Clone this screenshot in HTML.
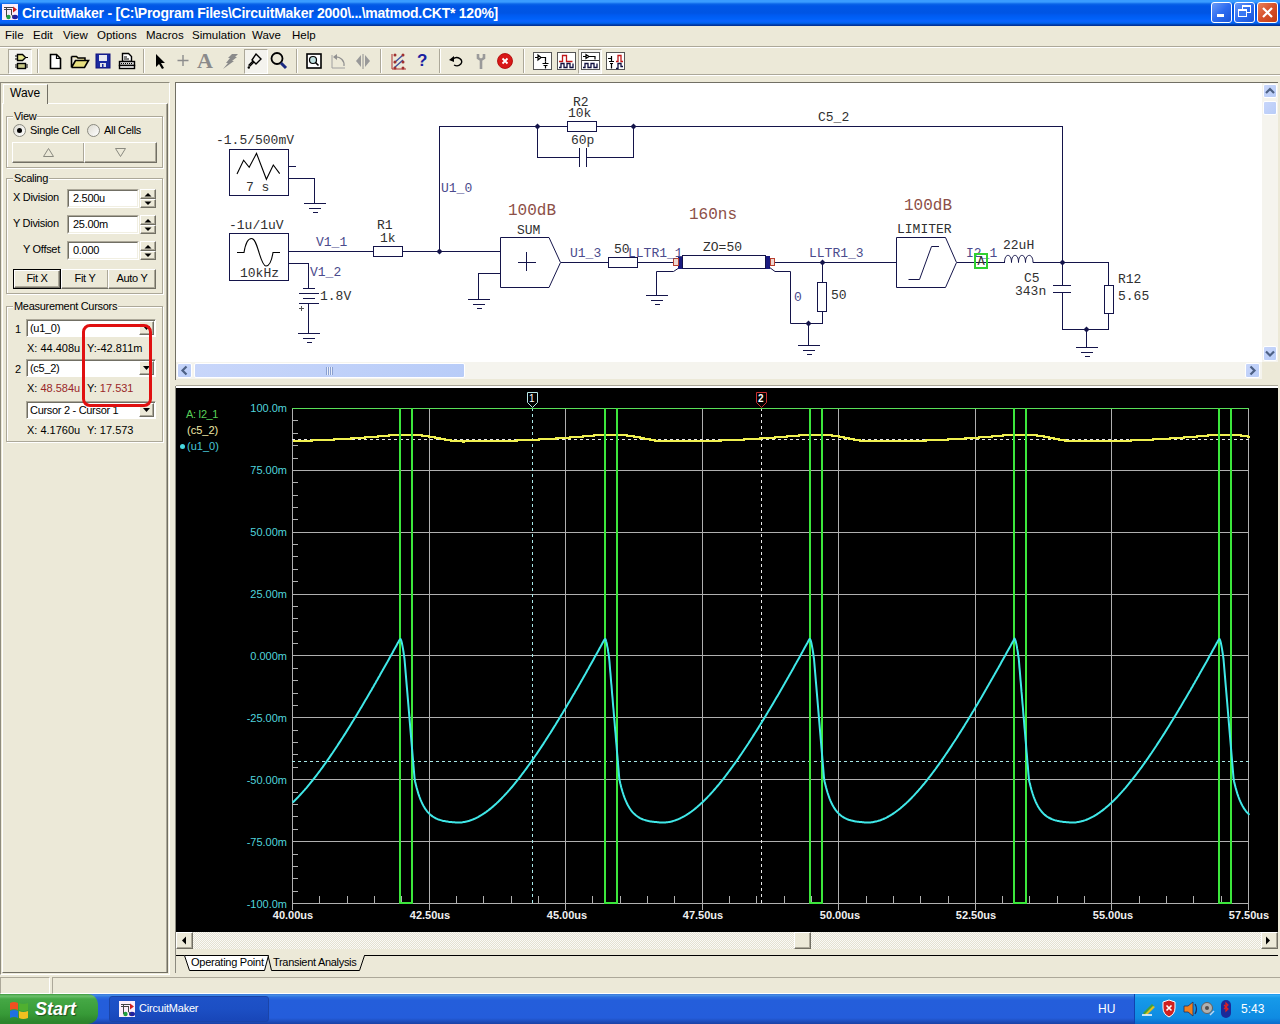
<!DOCTYPE html><html><head><meta charset="utf-8"><style>
*{margin:0;padding:0;box-sizing:border-box}
html,body{width:1280px;height:1024px;overflow:hidden;background:#ece9d8;font-family:"Liberation Sans",sans-serif;font-size:11px;color:#000;position:relative}
.a{position:absolute}
.t{position:absolute;white-space:nowrap;line-height:1}
.mono{font-family:"Liberation Mono",monospace}
</style></head><body>
<div class="a" style="left:0;top:0;width:1280px;height:26px;background:linear-gradient(#3a9cff 0px,#3a9cff 2px,#0a64e8 4px,#0056e6 6px,#0055e4 13px,#005af0 15px,#0062fa 19px,#0c62ff 21px,#0064ee 23px,#0052d4 24px,#003399 25px,#003399 26px)"></div><div class="a" style="left:0;top:26px;width:1280px;height:1px;background:#f4f4fc"></div>
<svg class="a" style="left:2px;top:4px" width="16" height="16"><rect x="0" y="0" width="16" height="16" fill="#fbeefa"/><path d="M2 3.5H11M2 5.5H9M4.5 3V13M9.5 5V11" stroke="#444" stroke-width="1" fill="none"/><path d="M11 2.5l4 3l-4 3z" fill="#d02020"/><ellipse cx="13" cy="13" rx="3" ry="2.2" fill="#2020a0"/><circle cx="6.5" cy="13" r="2.2" fill="#20a040"/><path d="M9.5 11L12 13" stroke="#444" stroke-width="1"/></svg>
<div class="t" style="left:22px;top:6px;font-size:14px;font-weight:bold;color:#fff;letter-spacing:-0.25px">CircuitMaker - [C:\Program Files\CircuitMaker 2000\...\matmod.CKT* 120%]</div>
<div class="a" style="left:1211px;top:2px;width:21px;height:21px;border:1px solid #fff;border-radius:3px;background:linear-gradient(135deg,#6b9bf7,#2d6cf0 50%,#1a55d8)"></div><div class="a" style="left:1217px;top:14px;width:7px;height:3px;background:#fff"></div><div class="a" style="left:1234px;top:2px;width:21px;height:21px;border:1px solid #fff;border-radius:3px;background:linear-gradient(135deg,#6b9bf7,#2d6cf0 50%,#1a55d8)"></div><div class="a" style="left:1242px;top:5px;width:9px;height:8px;border:1px solid #fff;border-top-width:2px"></div><div class="a" style="left:1238px;top:9px;width:9px;height:8px;border:1px solid #fff;border-top-width:2px;background:#3a78f2"></div><div class="a" style="left:1257px;top:2px;width:21px;height:21px;border:1px solid #fff;border-radius:3px;background:linear-gradient(135deg,#e9805a,#d6502a 50%,#c23d14)"></div><svg class="a" style="left:1257px;top:2px" width="21" height="21"><path d="M6 6L15 15M15 6L6 15" stroke="#fff" stroke-width="2.2"/></svg><div class="a" style="left:0;top:26px;width:1280px;height:20px;background:#ece9d8"></div><div class="t" style="left:5px;top:30px;font-size:11.5px">File</div><div class="t" style="left:33px;top:30px;font-size:11.5px">Edit</div><div class="t" style="left:63px;top:30px;font-size:11.5px">View</div><div class="t" style="left:97px;top:30px;font-size:11.5px">Options</div><div class="t" style="left:146px;top:30px;font-size:11.5px">Macros</div><div class="t" style="left:192px;top:30px;font-size:11.5px">Simulation</div><div class="t" style="left:252px;top:30px;font-size:11.5px">Wave</div><div class="t" style="left:292px;top:30px;font-size:11.5px">Help</div><div class="a" style="left:0;top:46px;width:1280px;height:1px;background:#aca899"></div><div class="a" style="left:0;top:47px;width:1280px;height:1px;background:#fff"></div><div class="a" style="left:0;top:74px;width:1280px;height:1px;background:#aca899"></div><div class="a" style="left:0;top:75px;width:1280px;height:1px;background:#fff"></div><div class="a" style="left:8px;top:49px;width:24px;height:25px;border-top:1px solid #aca899;border-left:1px solid #aca899;border-right:1px solid #fff;border-bottom:1px solid #fff;background:#f4f3ee"></div><svg class="a" style="left:8px;top:49px" width="24" height="25"><path d="M9.5 5.5h5l3 3l-3 3h-5z" fill="#e8e890" stroke="#000" stroke-width="1.4"/><path d="M7 7h2.5M7 10h2.5M17.5 8.5h2.5" stroke="#000" stroke-width="1.2"/><rect x="9.5" y="14.5" width="8" height="5" fill="#c8c888" stroke="#000" stroke-width="1.4"/><path d="M7 16h2.5M7 18h2.5M17.5 16h2.5M17.5 18h2.5" stroke="#000" stroke-width="1.2"/></svg><div class="a" style="left:37px;top:49px;width:1px;height:24px;background:#aca899"></div><div class="a" style="left:38px;top:49px;width:1px;height:24px;background:#fff"></div><svg class="a" style="left:46px;top:52px" width="20" height="18"><path d="M4.5 2.5h6l4 4v10h-10z" fill="#fff" stroke="#000" stroke-width="1.6"/><path d="M10.5 2.5v4h4" fill="none" stroke="#000" stroke-width="1.2"/></svg><svg class="a" style="left:69px;top:52px" width="22" height="18"><path d="M2.5 4.5h5l1.5 1.5h7v3" fill="#f0e890" stroke="#000" stroke-width="1.5"/><path d="M2.5 15.5v-11M2.5 15.5h13l4-7h-13l-4 7" fill="#e8e080" stroke="#000" stroke-width="1.6"/></svg><svg class="a" style="left:94px;top:52px" width="18" height="18"><rect x="2" y="2" width="14" height="14" fill="#1a2aa0" stroke="#10107a" stroke-width="1"/><rect x="5" y="3" width="8" height="6" fill="#e8e8f0"/><rect x="6" y="11" width="6" height="4" fill="#e0e0e8"/><rect x="8" y="12" width="1.5" height="3" fill="#1a2aa0"/></svg><svg class="a" style="left:117px;top:51px" width="20" height="20"><path d="M5.5 2.5h6l3 3v5h-9z" fill="#fff" stroke="#000" stroke-width="1.4"/><path d="M7 6h3M7 8h5" stroke="#000" stroke-width="1"/><rect x="2.5" y="10.5" width="15" height="4" fill="#e0e0e0" stroke="#000" stroke-width="1.4"/><path d="M4 12.5h12" stroke="#000" stroke-width="1" stroke-dasharray="1 1"/><rect x="2.5" y="14.5" width="15" height="3" fill="#fff" stroke="#000" stroke-width="1.4"/></svg><div class="a" style="left:143px;top:49px;width:1px;height:24px;background:#aca899"></div><div class="a" style="left:144px;top:49px;width:1px;height:24px;background:#fff"></div><svg class="a" style="left:150px;top:50px" width="20" height="22"><path d="M6 4v13l3-3l3 5l2-1l-3-5h4z" fill="#000"/></svg><svg class="a" style="left:174px;top:50px" width="18" height="22"><path d="M9 5v11M3.5 10.5h11" stroke="#8c8c8c" stroke-width="1.4"/></svg><div class="t" style="left:197px;top:50px;font-family:'Liberation Serif',serif;font-size:22px;font-weight:bold;color:#8a8a8a">A</div><svg class="a" style="left:217px;top:50px" width="22" height="22"><path d="M15 4h6l-3 3h2l-5 4h2l-11 8l5-6h-2l4-5h-2z" fill="#8a8a8a"/></svg><div class="a" style="left:244px;top:49px;width:24px;height:25px;border-top:1px solid #aca899;border-left:1px solid #aca899;border-right:1px solid #fff;border-bottom:1px solid #fff;background:#f4f3ee"></div><svg class="a" style="left:244px;top:49px" width="24" height="25"><path d="M12 5l5 5l-5 5l-4-4z" fill="none" stroke="#000" stroke-width="1.4"/><path d="M9 12l-4.5 4.5M10 13l-4.5 4.5" stroke="#000" stroke-width="1.2"/><circle cx="4.8" cy="18.5" r="1.2" fill="#000"/></svg><svg class="a" style="left:268px;top:50px" width="22" height="22"><circle cx="9" cy="8.5" r="5.5" fill="none" stroke="#000" stroke-width="1.8"/><path d="M13 13l5 5" stroke="#1a2a80" stroke-width="3"/></svg><div class="a" style="left:296px;top:49px;width:1px;height:24px;background:#aca899"></div><div class="a" style="left:297px;top:49px;width:1px;height:24px;background:#fff"></div><svg class="a" style="left:305px;top:52px" width="18" height="18"><rect x="2" y="2" width="14" height="14" fill="#fff" stroke="#000" stroke-width="1.6"/><circle cx="8" cy="8" r="3.5" fill="#bfe0e0" stroke="#000" stroke-width="1.2"/><path d="M10.5 10.5l3 3" stroke="#000" stroke-width="1.6"/></svg><svg class="a" style="left:329px;top:52px" width="20" height="18"><path d="M3 3v13h13" fill="none" stroke="#a0a0a0" stroke-width="1"/><path d="M6 5a8 8 0 0 1 9 9" fill="none" stroke="#909090" stroke-width="1.2"/><path d="M4 5l4-3v6z" fill="#909090"/></svg><svg class="a" style="left:353px;top:51px" width="20" height="20"><path d="M8 4l-5 6l5 6z" fill="#999"/><path d="M12 4l5 6l-5 6z" fill="#999"/><path d="M10 3v15" stroke="#909090" stroke-width="1"/></svg><div class="a" style="left:380px;top:49px;width:1px;height:24px;background:#aca899"></div><div class="a" style="left:381px;top:49px;width:1px;height:24px;background:#fff"></div><svg class="a" style="left:389px;top:51px" width="20" height="20"><path d="M3 3v15h14" fill="none" stroke="#b03030" stroke-width="1"/><path d="M5 12l9-8M5 17l9-8" stroke="#4050a0" stroke-width="1.4"/><circle cx="6" cy="4" r="1.5" fill="#a03030"/><circle cx="14" cy="4" r="1.5" fill="#a03030"/><circle cx="6" cy="11" r="1.5" fill="#a03030"/><circle cx="14" cy="11" r="1.5" fill="#a03030"/><circle cx="6" cy="17" r="1.5" fill="#a03030"/><circle cx="14" cy="17" r="1.5" fill="#a03030"/></svg><div class="t" style="left:417px;top:52px;font-size:17px;font-weight:bold;color:#1a20a0">?</div><div class="a" style="left:439px;top:49px;width:1px;height:24px;background:#aca899"></div><div class="a" style="left:440px;top:49px;width:1px;height:24px;background:#fff"></div><svg class="a" style="left:447px;top:51px" width="20" height="20"><path d="M6 8a5 4 0 1 1 1 6" fill="none" stroke="#000" stroke-width="1.4"/><path d="M2 9l5-4v6z" fill="#000"/></svg><svg class="a" style="left:472px;top:51px" width="18" height="20"><path d="M6 3v4l3 2l3-2v-4M9 9v9" fill="none" stroke="#9a9a9a" stroke-width="2.6"/></svg><svg class="a" style="left:495px;top:51px" width="20" height="20"><circle cx="10" cy="10" r="7.5" fill="#d81818" stroke="#a00" stroke-width="0.8"/><path d="M7.5 7.5l5 5M12.5 7.5l-5 5" stroke="#fff" stroke-width="1.8"/></svg><div class="a" style="left:523px;top:49px;width:1px;height:24px;background:#aca899"></div><div class="a" style="left:524px;top:49px;width:1px;height:24px;background:#fff"></div><svg class="a" style="left:532px;top:51px" width="21" height="20"><rect x="1.5" y="1.5" width="18" height="17" fill="#fff" stroke="#555" stroke-width="1"/><path d="M3 6.5h3M6 4v5l3-2.5zM9 6.5h4.5v4M10.5 12.5h6M11.5 14.5h4M13.5 14.5v3" fill="none" stroke="#000" stroke-width="1.2"/><path d="M13.5 10.5v2" stroke="#000" stroke-width="1.2"/></svg><svg class="a" style="left:556px;top:51px" width="21" height="20"><rect x="1.5" y="1.5" width="18" height="17" fill="#fff" stroke="#555" stroke-width="1"/><path d="M3 10.5h3.5v-6h4v6h6" fill="none" stroke="#c01818" stroke-width="1.3"/><path d="M3 16.5h2v-4h3v4h3v-4h3v4h3v-4" fill="none" stroke="#101040" stroke-width="1.3"/></svg><div class="a" style="left:578px;top:49px;width:24px;height:25px;border-top:1px solid #aca899;border-left:1px solid #aca899;border-right:1px solid #fff;border-bottom:1px solid #fff;background:#f4f3ee"></div><svg class="a" style="left:580px;top:51px" width="21" height="20"><rect x="1.5" y="1.5" width="18" height="17" fill="#fff" stroke="#555" stroke-width="1"/><path d="M3 5.5h3M6 3.5v4l3-2zM9 5.5h6v3" fill="none" stroke="#000" stroke-width="1.2"/><path d="M2 9.5h17" stroke="#333" stroke-width="1"/><path d="M3 16.5h2v-4h3v4h3v-4h3v4h3v-4" fill="none" stroke="#101040" stroke-width="1.3"/></svg><svg class="a" style="left:605px;top:51px" width="21" height="20"><rect x="1.5" y="1.5" width="18" height="17" fill="#fff" stroke="#555" stroke-width="1"/><path d="M3 7.5h3.5M6.5 5v5M4 10.5h5M5 12.5h3M6.5 12.5v5" fill="none" stroke="#000" stroke-width="1.2"/><path d="M11 10.5h2v-6h3v6h2" fill="none" stroke="#c01818" stroke-width="1.3"/><path d="M11 17.5h2v-5h3v3h2" fill="none" stroke="#101040" stroke-width="1.3"/></svg><div class="a" style="left:0;top:76px;width:176px;height:901px;background:#ece9d8"></div><div class="a" style="left:0;top:82px;width:170px;height:893px;border-top:1px solid #8e8b7c;border-left:1px solid #8e8b7c;border-right:1px solid #fff;border-bottom:1px solid #fff"></div><div class="a" style="left:2px;top:103px;width:166px;height:870px;border-left:1px solid #fff;border-top:1px solid #fff;border-right:1px solid #716f64;border-bottom:1px solid #716f64;background:#ece9d8"></div><div class="a" style="left:166px;top:104px;width:1px;height:868px;background:#aca899"></div><div class="a" style="left:3px;top:84px;width:45px;height:20px;border-left:1px solid #fff;border-top:1px solid #fff;border-right:1px solid #716f64;background:#ece9d8"></div><div class="t" style="left:10px;top:87px;font-size:12px">Wave</div><div class="a" style="left:6px;top:116px;width:157px;height:52px;border:1px solid #aca899;box-shadow:inset 1px 1px 0 #fff,1px 1px 0 #fff"></div><div class="t" style="left:13px;top:111px;padding:0 1px;background:#ece9d8;font-size:11px;letter-spacing:-0.3px">View</div><div class="a" style="left:13px;top:124px;width:13px;height:13px;border-radius:50%;border:1px solid #8a8a80;background:linear-gradient(135deg,#dcdad0,#fff)"></div><div class="a" style="left:17px;top:128px;width:5px;height:5px;border-radius:50%;background:#000"></div><div class="t" style="left:30px;top:125px;font-size:11px;letter-spacing:-0.3px">Single Cell</div><div class="a" style="left:87px;top:124px;width:13px;height:13px;border-radius:50%;border:1px solid #8a8a80;background:linear-gradient(135deg,#dcdad0,#fff)"></div><div class="t" style="left:104px;top:125px;font-size:11px;letter-spacing:-0.3px">All Cells</div><div class="a" style="left:12px;top:142px;width:73px;height:21px;border-left:1px solid #fff;border-top:1px solid #fff;border-right:1px solid #716f64;border-bottom:1px solid #716f64;background:#ece9d8"></div><div class="a" style="left:83px;top:143px;width:1px;height:19px;background:#aca899"></div><div class="a" style="left:13px;top:161px;width:71px;height:1px;background:#aca899"></div><div class="a" style="left:84px;top:142px;width:73px;height:21px;border-left:1px solid #fff;border-top:1px solid #fff;border-right:1px solid #716f64;border-bottom:1px solid #716f64;background:#ece9d8"></div><div class="a" style="left:155px;top:143px;width:1px;height:19px;background:#aca899"></div><div class="a" style="left:85px;top:161px;width:71px;height:1px;background:#aca899"></div><svg class="a" style="left:12px;top:142px" width="145" height="21"><path d="M36.5 6.5l5 8h-10z" fill="none" stroke="#8a8a80" stroke-width="1"/><path d="M103.5 6.5h10l-5 8z" fill="none" stroke="#8a8a80" stroke-width="1"/></svg><div class="a" style="left:6px;top:178px;width:157px;height:116px;border:1px solid #aca899;box-shadow:inset 1px 1px 0 #fff,1px 1px 0 #fff"></div><div class="t" style="left:13px;top:173px;padding:0 1px;background:#ece9d8;font-size:11px;letter-spacing:-0.3px">Scaling</div><div class="t" style="left:13px;top:192px;font-size:11px;letter-spacing:-0.3px">X Division</div><div class="a" style="left:67px;top:189px;width:72px;height:19px;border-left:1px solid #aca899;border-top:1px solid #aca899;border-right:1px solid #fff;border-bottom:1px solid #fff;background:#fff"></div><div class="a" style="left:68px;top:190px;width:70px;height:17px;border-left:1px solid #716f64;border-top:1px solid #716f64;border-right:1px solid #f1efe2;border-bottom:1px solid #f1efe2"></div><div class="t" style="left:73px;top:193px;font-size:11px;letter-spacing:-0.3px">2.500u</div><div class="a" style="left:140px;top:189px;width:16px;height:10px;border-left:1px solid #fff;border-top:1px solid #fff;border-right:1px solid #716f64;border-bottom:1px solid #716f64;background:#ece9d8"></div><div class="a" style="left:154px;top:190px;width:1px;height:8px;background:#aca899"></div><div class="a" style="left:141px;top:197px;width:14px;height:1px;background:#aca899"></div><div class="a" style="left:140px;top:199px;width:16px;height:9px;border-left:1px solid #fff;border-top:1px solid #fff;border-right:1px solid #716f64;border-bottom:1px solid #716f64;background:#ece9d8"></div><div class="a" style="left:154px;top:200px;width:1px;height:7px;background:#aca899"></div><div class="a" style="left:141px;top:206px;width:14px;height:1px;background:#aca899"></div><svg class="a" style="left:140px;top:189px" width="16" height="19"><path d="M4.5 7.5h7l-3.5-3.5z" fill="#000"/><path d="M4.5 12.5h7l-3.5 3.5z" fill="#000"/></svg><div class="t" style="left:13px;top:218px;font-size:11px;letter-spacing:-0.3px">Y Division</div><div class="a" style="left:67px;top:215px;width:72px;height:19px;border-left:1px solid #aca899;border-top:1px solid #aca899;border-right:1px solid #fff;border-bottom:1px solid #fff;background:#fff"></div><div class="a" style="left:68px;top:216px;width:70px;height:17px;border-left:1px solid #716f64;border-top:1px solid #716f64;border-right:1px solid #f1efe2;border-bottom:1px solid #f1efe2"></div><div class="t" style="left:73px;top:219px;font-size:11px;letter-spacing:-0.3px">25.00m</div><div class="a" style="left:140px;top:215px;width:16px;height:10px;border-left:1px solid #fff;border-top:1px solid #fff;border-right:1px solid #716f64;border-bottom:1px solid #716f64;background:#ece9d8"></div><div class="a" style="left:154px;top:216px;width:1px;height:8px;background:#aca899"></div><div class="a" style="left:141px;top:223px;width:14px;height:1px;background:#aca899"></div><div class="a" style="left:140px;top:225px;width:16px;height:9px;border-left:1px solid #fff;border-top:1px solid #fff;border-right:1px solid #716f64;border-bottom:1px solid #716f64;background:#ece9d8"></div><div class="a" style="left:154px;top:226px;width:1px;height:7px;background:#aca899"></div><div class="a" style="left:141px;top:232px;width:14px;height:1px;background:#aca899"></div><svg class="a" style="left:140px;top:215px" width="16" height="19"><path d="M4.5 7.5h7l-3.5-3.5z" fill="#000"/><path d="M4.5 12.5h7l-3.5 3.5z" fill="#000"/></svg><div class="t" style="left:23px;top:244px;font-size:11px;letter-spacing:-0.3px">Y Offset</div><div class="a" style="left:67px;top:241px;width:72px;height:19px;border-left:1px solid #aca899;border-top:1px solid #aca899;border-right:1px solid #fff;border-bottom:1px solid #fff;background:#fff"></div><div class="a" style="left:68px;top:242px;width:70px;height:17px;border-left:1px solid #716f64;border-top:1px solid #716f64;border-right:1px solid #f1efe2;border-bottom:1px solid #f1efe2"></div><div class="t" style="left:73px;top:245px;font-size:11px;letter-spacing:-0.3px">0.000</div><div class="a" style="left:140px;top:241px;width:16px;height:10px;border-left:1px solid #fff;border-top:1px solid #fff;border-right:1px solid #716f64;border-bottom:1px solid #716f64;background:#ece9d8"></div><div class="a" style="left:154px;top:242px;width:1px;height:8px;background:#aca899"></div><div class="a" style="left:141px;top:249px;width:14px;height:1px;background:#aca899"></div><div class="a" style="left:140px;top:251px;width:16px;height:9px;border-left:1px solid #fff;border-top:1px solid #fff;border-right:1px solid #716f64;border-bottom:1px solid #716f64;background:#ece9d8"></div><div class="a" style="left:154px;top:252px;width:1px;height:7px;background:#aca899"></div><div class="a" style="left:141px;top:258px;width:14px;height:1px;background:#aca899"></div><svg class="a" style="left:140px;top:241px" width="16" height="19"><path d="M4.5 7.5h7l-3.5-3.5z" fill="#000"/><path d="M4.5 12.5h7l-3.5 3.5z" fill="#000"/></svg><div class="a" style="left:13px;top:269px;width:48px;height:20px;border:1px solid #000"></div><div class="a" style="left:14px;top:270px;width:46px;height:18px;border-left:1px solid #fff;border-top:1px solid #fff;border-right:1px solid #716f64;border-bottom:1px solid #716f64;background:#ece9d8"></div><div class="a" style="left:58px;top:271px;width:1px;height:16px;background:#aca899"></div><div class="a" style="left:15px;top:286px;width:44px;height:1px;background:#aca899"></div><div class="t" style="left:14px;top:273px;width:46px;text-align:center;font-size:11px;letter-spacing:-0.3px">Fit X</div><div class="a" style="left:61px;top:269px;width:48px;height:20px;border-left:1px solid #fff;border-top:1px solid #fff;border-right:1px solid #716f64;border-bottom:1px solid #716f64;background:#ece9d8"></div><div class="a" style="left:107px;top:270px;width:1px;height:18px;background:#aca899"></div><div class="a" style="left:62px;top:287px;width:46px;height:1px;background:#aca899"></div><div class="t" style="left:61px;top:273px;width:48px;text-align:center;font-size:11px;letter-spacing:-0.3px">Fit Y</div><div class="a" style="left:108px;top:269px;width:48px;height:20px;border-left:1px solid #fff;border-top:1px solid #fff;border-right:1px solid #716f64;border-bottom:1px solid #716f64;background:#ece9d8"></div><div class="a" style="left:154px;top:270px;width:1px;height:18px;background:#aca899"></div><div class="a" style="left:109px;top:287px;width:46px;height:1px;background:#aca899"></div><div class="t" style="left:108px;top:273px;width:48px;text-align:center;font-size:11px;letter-spacing:-0.3px">Auto Y</div><div class="a" style="left:6px;top:306px;width:157px;height:136px;border:1px solid #aca899;box-shadow:inset 1px 1px 0 #fff,1px 1px 0 #fff"></div><div class="t" style="left:13px;top:301px;padding:0 1px;background:#ece9d8;font-size:11px;letter-spacing:-0.3px">Measurement Cursors</div><div class="t" style="left:15px;top:324px;font-size:11px;letter-spacing:-0.3px">1</div><div class="a" style="left:26px;top:319px;width:130px;height:18px;border-left:1px solid #aca899;border-top:1px solid #aca899;border-right:1px solid #fff;border-bottom:1px solid #fff;background:#fff"></div><div class="a" style="left:27px;top:320px;width:128px;height:16px;border-left:1px solid #716f64;border-top:1px solid #716f64"></div><div class="t" style="left:30px;top:323px;font-size:11px;letter-spacing:-0.3px">(u1_0)</div><div class="a" style="left:139px;top:321px;width:15px;height:14px;border-left:1px solid #fff;border-top:1px solid #fff;border-right:1px solid #716f64;border-bottom:1px solid #716f64;background:#ece9d8"></div><div class="a" style="left:152px;top:322px;width:1px;height:12px;background:#aca899"></div><div class="a" style="left:140px;top:333px;width:13px;height:1px;background:#aca899"></div><svg class="a" style="left:139px;top:321px" width="15" height="14"><path d="M4 5h7l-3.5 4z" fill="#000"/></svg><div class="t" style="left:27px;top:343px;font-size:11px;letter-spacing:0px">X: 44.408u</div><div class="t" style="left:87px;top:343px;font-size:11px;letter-spacing:0px">Y:-42.811m</div><div class="t" style="left:15px;top:364px;font-size:11px;letter-spacing:-0.3px">2</div><div class="a" style="left:26px;top:359px;width:130px;height:18px;border-left:1px solid #aca899;border-top:1px solid #aca899;border-right:1px solid #fff;border-bottom:1px solid #fff;background:#fff"></div><div class="a" style="left:27px;top:360px;width:128px;height:16px;border-left:1px solid #716f64;border-top:1px solid #716f64"></div><div class="t" style="left:30px;top:363px;font-size:11px;letter-spacing:-0.3px">(c5_2)</div><div class="a" style="left:139px;top:361px;width:15px;height:14px;border-left:1px solid #fff;border-top:1px solid #fff;border-right:1px solid #716f64;border-bottom:1px solid #716f64;background:#ece9d8"></div><div class="a" style="left:152px;top:362px;width:1px;height:12px;background:#aca899"></div><div class="a" style="left:140px;top:373px;width:13px;height:1px;background:#aca899"></div><svg class="a" style="left:139px;top:361px" width="15" height="14"><path d="M4 5h7l-3.5 4z" fill="#000"/></svg><div class="t" style="left:27px;top:383px;font-size:11px;letter-spacing:0px">X: <span style="color:#9a2828">48.584u</span></div><div class="t" style="left:87px;top:383px;font-size:11px;letter-spacing:0px">Y: <span style="color:#9a2828">17.531</span></div><div class="a" style="left:26px;top:401px;width:130px;height:18px;border-left:1px solid #aca899;border-top:1px solid #aca899;border-right:1px solid #fff;border-bottom:1px solid #fff;background:#fff"></div><div class="a" style="left:27px;top:402px;width:128px;height:16px;border-left:1px solid #716f64;border-top:1px solid #716f64"></div><div class="t" style="left:30px;top:405px;font-size:11px;letter-spacing:-0.3px">Cursor 2 - Cursor 1</div><div class="a" style="left:139px;top:403px;width:15px;height:14px;border-left:1px solid #fff;border-top:1px solid #fff;border-right:1px solid #716f64;border-bottom:1px solid #716f64;background:#ece9d8"></div><div class="a" style="left:152px;top:404px;width:1px;height:12px;background:#aca899"></div><div class="a" style="left:140px;top:415px;width:13px;height:1px;background:#aca899"></div><svg class="a" style="left:139px;top:403px" width="15" height="14"><path d="M4 5h7l-3.5 4z" fill="#000"/></svg><div class="t" style="left:27px;top:425px;font-size:11px;letter-spacing:0px">X: 4.1760u</div><div class="t" style="left:87px;top:425px;font-size:11px;letter-spacing:0px">Y: 17.573</div><div class="a" style="left:82px;top:324px;width:70px;height:83px;border:3px solid #e01010;border-radius:8px"></div><div class="a" style="left:175px;top:82px;width:1103px;height:1px;background:#716f64"></div><div class="a" style="left:175px;top:82px;width:1px;height:298px;background:#716f64"></div><div class="a" style="left:176px;top:83px;width:1086px;height:279px;background:#fff"></div><svg class="a" style="left:176px;top:83px" width="1086" height="279" shape-rendering="crispEdges"><g transform="translate(-176,-83)" fill="none" stroke="#14144a" stroke-width="1"><rect x="229.5" y="149.5" width="59" height="46" fill="#fff"/><path d="M237 174L243.6 160.2L249.2 167.3L256.5 153.4L266.4 179.3L273.3 165L279.7 173.6" stroke="#000" shape-rendering="auto" stroke-width="1.1"/><path d="M288.5 166.5 L296 166.5"/><path d="M288.5 178.5 L314.5 178.5 L314.5 203.5"/><path d="M303.5 203.5 L325.5 203.5"/><path d="M308.5 208.5 L320.5 208.5"/><path d="M312.5 212.5 L317.5 212.5"/><rect x="229.5" y="233.5" width="59" height="47" fill="#fff"/><path d="M237 252.5H244C246 240 249 238.5 251.5 238.5C255 238.5 257 246 259 252.5C261 259 263 266 266 266C269 266 271.5 262 273 252.5H280" stroke="#000" shape-rendering="auto" stroke-width="1.1"/><path d="M288.5 251.5 L373.5 251.5"/><path d="M288.5 263.5 L308.5 263.5 L308.5 288.5"/><path d="M303 288.5 L315 288.5"/><path d="M299 293.5 L319 293.5"/><path d="M303 298.5 L315 298.5"/><path d="M299 303.5 L319 303.5"/><path d="M308.5 303.5 L308.5 333.5"/><path d="M297.5 333.5 L319.5 333.5"/><path d="M302.5 338.5 L314.5 338.5"/><path d="M306.5 342.5 L311.5 342.5"/><path d="M299 308H304M301.5 305.5V310.5" stroke="#555"/><rect x="373.5" y="246.5" width="29" height="10" fill="#fff"/><path d="M402.5 251.5 L500.5 251.5"/><path d="M439.5 248.5l3 3l-3 3l-3-3z" fill="#14144a" stroke="none" shape-rendering="auto"/><path d="M439.5 251.5 L439.5 126.5 L1062.5 126.5 L1062.5 329.5 L1108.5 329.5"/><rect x="567.5" y="121.5" width="29" height="10" fill="#fff"/><path d="M537.5 123.5l3 3l-3 3l-3-3z" fill="#14144a" stroke="none" shape-rendering="auto"/><path d="M633.5 123.5l3 3l-3 3l-3-3z" fill="#14144a" stroke="none" shape-rendering="auto"/><path d="M537.5 126.5 L537.5 157.5 L579.5 157.5"/><path d="M586.5 157.5 L633.5 157.5 L633.5 126.5"/><path d="M579.5 148 L579.5 167"/><path d="M586.5 148 L586.5 167"/><path d="M500.5 237.5H549L560.5 262.5L549 287.5H500.5Z" fill="#fff" shape-rendering="auto"/><path d="M517.5 262.5 L535.5 262.5"/><path d="M526.5 252 L526.5 271"/><path d="M500.5 273.5 L478.5 273.5 L478.5 299.5"/><path d="M467.5 299.5 L489.5 299.5"/><path d="M472.5 304.5 L484.5 304.5"/><path d="M476.5 308.5 L481.5 308.5"/><path d="M560.5 262.5 L608.5 262.5"/><rect x="608.5" y="257.5" width="29" height="10" fill="#fff"/><path d="M637.5 262.5 L673.5 262.5"/><rect x="682.5" y="255.5" width="83" height="13" fill="#fff" stroke="#14144a"/><rect x="678" y="255.5" width="4" height="13" fill="#1a1a80" stroke="none"/><rect x="766" y="255.5" width="4" height="13" fill="#1a1a80" stroke="none"/><rect x="673.5" y="258.5" width="4.5" height="6.5" fill="#f0d8d0" stroke="#b84030"/><rect x="770" y="258.5" width="4.5" height="6.5" fill="#f0d8d0" stroke="#b84030"/><path d="M678 268.5L673.5 271.5H656.5V295.5" shape-rendering="auto"/><path d="M645.5 295.5 L667.5 295.5"/><path d="M650.5 300.5 L662.5 300.5"/><path d="M654.5 304.5 L659.5 304.5"/><path d="M769 267L775 271.5H790.5V323.5H822.5" shape-rendering="auto"/><path d="M774.5 262.5 L896.5 262.5"/><path d="M822.5 259.5l3 3l-3 3l-3-3z" fill="#14144a" stroke="none" shape-rendering="auto"/><path d="M822.5 262.5 L822.5 282.5"/><rect x="817.5" y="282.5" width="9" height="29" fill="#fff"/><path d="M822.5 311.5 L822.5 323.5"/><path d="M808.5 320.5l3 3l-3 3l-3-3z" fill="#14144a" stroke="none" shape-rendering="auto"/><path d="M808.5 323.5 L808.5 345.5"/><path d="M797.5 345.5 L819.5 345.5"/><path d="M802.5 350.5 L814.5 350.5"/><path d="M806.5 354.5 L811.5 354.5"/><path d="M896.5 237.5H945.5L956.5 262.5L945.5 287.5H896.5Z" fill="#fff" shape-rendering="auto"/><path d="M908.5 279.5H919.5L931.5 246.5H939" shape-rendering="auto"/><path d="M956.5 262.5 L1004.5 262.5"/><path d="M1004.5 262.5C1004.5 253 1011.5 253 1011.5 262.5C1011.5 253 1018.5 253 1018.5 262.5C1018.5 253 1025.5 253 1025.5 262.5C1025.5 253 1033 253 1033 262.5" shape-rendering="auto"/><path d="M1033 262.5 L1108.5 262.5 L1108.5 285.5"/><path d="M1062.5 259.5l3 3l-3 3l-3-3z" fill="#14144a" stroke="none" shape-rendering="auto"/><rect x="1053" y="286" width="19" height="6" fill="#fff" stroke="none"/><path d="M1053 285.5 L1071 285.5"/><path d="M1053 292.5 L1071 292.5"/><rect x="1104.5" y="285.5" width="9" height="28" fill="#fff"/><path d="M1108.5 313.5 L1108.5 329.5"/><path d="M1086.5 326.5l3 3l-3 3l-3-3z" fill="#14144a" stroke="none" shape-rendering="auto"/><path d="M1086.5 329.5 L1086.5 347.5"/><path d="M1075.5 347.5 L1097.5 347.5"/><path d="M1080.5 352.5 L1092.5 352.5"/><path d="M1084.5 356.5 L1089.5 356.5"/></g><text x="40" y="61" fill="#303030" font-family="Liberation Mono" font-size="13" stroke="none">-1.5/500mV</text><text x="70" y="108" fill="#303030" font-family="Liberation Mono" font-size="13" stroke="none">7 s</text><text x="53" y="145.5" fill="#303030" font-family="Liberation Mono" font-size="13" stroke="none">-1u/1uV</text><text x="64" y="194" fill="#303030" font-family="Liberation Mono" font-size="13" stroke="none">10kHz</text><text x="140" y="162.5" fill="#4a4a8c" font-family="Liberation Mono" font-size="13" stroke="none">V1_1</text><text x="134" y="193" fill="#4a4a8c" font-family="Liberation Mono" font-size="13" stroke="none">V1_2</text><text x="144" y="216.5" fill="#303030" font-family="Liberation Mono" font-size="13" stroke="none">1.8V</text><text x="201" y="146" fill="#303030" font-family="Liberation Mono" font-size="13" stroke="none">R1</text><text x="204" y="158.5" fill="#303030" font-family="Liberation Mono" font-size="13" stroke="none">1k</text><text x="265" y="109" fill="#4a4a8c" font-family="Liberation Mono" font-size="13" stroke="none">U1_0</text><text x="397" y="22.5" fill="#303030" font-family="Liberation Mono" font-size="13" stroke="none">R2</text><text x="392" y="34" fill="#303030" font-family="Liberation Mono" font-size="13" stroke="none">10k</text><text x="395" y="61" fill="#303030" font-family="Liberation Mono" font-size="13" stroke="none">60p</text><text x="642" y="38" fill="#303030" font-family="Liberation Mono" font-size="13" stroke="none">C5_2</text><text x="332" y="132" fill="#8c5048" font-family="Liberation Mono" font-size="16" stroke="none">100dB</text><text x="341" y="150.5" fill="#303030" font-family="Liberation Mono" font-size="13" stroke="none">SUM</text><text x="394" y="174" fill="#4a4a8c" font-family="Liberation Mono" font-size="13" stroke="none">U1_3</text><text x="438" y="170" fill="#303030" font-family="Liberation Mono" font-size="13" stroke="none">50</text><text x="452" y="174" fill="#4a4a8c" font-family="Liberation Mono" font-size="13" stroke="none">LLTR1_1</text><text x="513" y="136" fill="#8c5048" font-family="Liberation Mono" font-size="16" stroke="none">160ns</text><text x="527" y="168" fill="#303030" font-family="Liberation Mono" font-size="13" stroke="none">ZO=50</text><text x="633" y="174" fill="#4a4a8c" font-family="Liberation Mono" font-size="13" stroke="none">LLTR1_3</text><text x="618" y="218" fill="#4a4a8c" font-family="Liberation Mono" font-size="13" stroke="none">0</text><text x="655" y="216" fill="#303030" font-family="Liberation Mono" font-size="13" stroke="none">50</text><text x="728" y="127" fill="#8c5048" font-family="Liberation Mono" font-size="16" stroke="none">100dB</text><text x="721" y="150" fill="#303030" font-family="Liberation Mono" font-size="13" stroke="none">LIMITER</text><text x="790" y="174" fill="#4a4a8c" font-family="Liberation Mono" font-size="13" stroke="none">I2_1</text><text x="827" y="166" fill="#303030" font-family="Liberation Mono" font-size="13" stroke="none">22uH</text><text x="848" y="199" fill="#303030" font-family="Liberation Mono" font-size="13" stroke="none">C5</text><text x="839" y="212" fill="#303030" font-family="Liberation Mono" font-size="13" stroke="none">343n</text><text x="942" y="200" fill="#303030" font-family="Liberation Mono" font-size="13" stroke="none">R12</text><text x="942" y="217" fill="#303030" font-family="Liberation Mono" font-size="13" stroke="none">5.65</text><rect x="799" y="170.5" width="12" height="14" fill="none" stroke="#30d030" stroke-width="2"/><text x="801.5" y="182" fill="#303030" font-family="Liberation Mono" font-size="12" stroke="none">A</text></svg><div class="a" style="left:1262px;top:83px;width:16px;height:279px;background:#f5f4ee"></div><div class="a" style="left:1263px;top:84px;width:14px;height:14px;border:1px solid #fff;border-radius:2px;background:linear-gradient(135deg,#c8d6fa,#b8ccf8)"></div><svg class="a" style="left:0;top:0" width="1280" height="400"><path d="M1266 93L1270 89L1274 93" fill="none" stroke="#4d6185" stroke-width="2.2"/></svg><div class="a" style="left:1263px;top:101px;width:14px;height:14px;border:1px solid #fff;border-radius:2px;background:linear-gradient(135deg,#c8d6fa,#b8ccf8)"></div><div class="a" style="left:1263px;top:346px;width:14px;height:15px;border:1px solid #fff;border-radius:2px;background:linear-gradient(135deg,#c8d6fa,#b8ccf8)"></div><svg class="a" style="left:0;top:0" width="1280" height="400"><path d="M1266 351.5L1270 355.5L1274 351.5" fill="none" stroke="#4d6185" stroke-width="2.2"/></svg><div class="a" style="left:176px;top:362px;width:1102px;height:17px;background:#f5f4ee"></div><div class="a" style="left:177px;top:363px;width:15px;height:15px;border:1px solid #fff;border-radius:2px;background:linear-gradient(135deg,#c8d6fa,#b8ccf8)"></div><svg class="a" style="left:0;top:0" width="1280" height="400"><path d="M186.5 366.5L182.5 370.5L186.5 374.5" fill="none" stroke="#4d6185" stroke-width="2.2"/></svg><div class="a" style="left:194px;top:363px;width:271px;height:15px;border:1px solid #fff;border-radius:2px;background:linear-gradient(135deg,#c8d6fa,#b8ccf8)"></div><div class="a" style="left:326px;top:367px;width:7px;height:8px;background:repeating-linear-gradient(90deg,#8aa0d0 0 1px,#e8eefc 1px 2px)"></div><div class="a" style="left:1245px;top:363px;width:15px;height:15px;border:1px solid #fff;border-radius:2px;background:linear-gradient(135deg,#c8d6fa,#b8ccf8)"></div><svg class="a" style="left:0;top:0" width="1280" height="400"><path d="M1250.5 366.5L1254.5 370.5L1250.5 374.5" fill="none" stroke="#4d6185" stroke-width="2.2"/></svg><div class="a" style="left:1262px;top:362px;width:16px;height:17px;background:#ece9d8"></div><div class="a" style="left:176px;top:385px;width:1102px;height:1px;background:#aca899"></div><div class="a" style="left:176px;top:386px;width:1102px;height:2px;background:#fff"></div><div class="a" style="left:176px;top:388px;width:1102px;height:544px;background:#000"></div><svg class="a" style="left:176px;top:388px" width="1102" height="544"><g transform="translate(-176,-388)"><path d="M429.5 408.5V903.5 M565.5 408.5V903.5 M702.5 408.5V903.5 M838.5 408.5V903.5 M975.5 408.5V903.5 M1111.5 408.5V903.5 M1248.5 408.5V903.5 M292.5 470.5H1248.5 M292.5 532.5H1248.5 M292.5 594.5H1248.5 M292.5 655.5H1248.5 M292.5 717.5H1248.5 M292.5 779.5H1248.5 M292.5 841.5H1248.5" stroke="#b0b0b0" stroke-width="1" shape-rendering="crispEdges"/><path d="M292.5 408V910M292 903.5H1249M1248.5 903V910" stroke="#b0b0b0" stroke-width="1" shape-rendering="crispEdges"/><path d="M292 420.5H298 M292 433.5H298 M292 445.5H298 M292 458.5H298 M292 482.5H298 M292 495.5H298 M292 507.5H298 M292 519.5H298 M292 544.5H298 M292 556.5H298 M292 569.5H298 M292 581.5H298 M292 606.5H298 M292 618.5H298 M292 631.5H298 M292 643.5H298 M292 668.5H298 M292 680.5H298 M292 693.5H298 M292 705.5H298 M292 730.5H298 M292 742.5H298 M292 754.5H298 M292 767.5H298 M292 792.5H298 M292 804.5H298 M292 816.5H298 M292 829.5H298 M292 854.5H298 M292 866.5H298 M292 878.5H298 M292 891.5H298 M319.5 903V896 M347.5 903V896 M374.5 903V896 M401.5 903V896 M456.5 903V896 M483.5 903V896 M511.5 903V896 M538.5 903V896 M592.5 903V896 M620.5 903V896 M647.5 903V896 M674.5 903V896 M729.5 903V896 M756.5 903V896 M784.5 903V896 M811.5 903V896 M866.5 903V896 M893.5 903V896 M920.5 903V896 M948.5 903V896 M1002.5 903V896 M1029.5 903V896 M1057.5 903V896 M1084.5 903V896 M1139.5 903V896 M1166.5 903V896 M1193.5 903V896 M1221.5 903V896 M429.5 903V910 M565.5 903V910 M702.5 903V910 M838.5 903V910 M975.5 903V910 M1111.5 903V910" stroke="#b0b0b0" stroke-width="1" shape-rendering="crispEdges"/><path d="M532.5 408V903" stroke="#a8e8e8" stroke-width="1" stroke-dasharray="3 3" shape-rendering="crispEdges"/><path d="M761.5 408V903" stroke="#e8e8e8" stroke-width="1" stroke-dasharray="3 3" shape-rendering="crispEdges"/><path d="M292 761.5H1249" stroke="#a8e8e8" stroke-width="1" stroke-dasharray="3 3" shape-rendering="crispEdges"/><path d="M292 439.5H1249" stroke="#e8e8e8" stroke-width="1" stroke-dasharray="3 3" shape-rendering="crispEdges"/><path d="M292.5,441.0 L293.5,441.0 L294.5,441.0 L295.5,441.0 L296.5,441.0 L297.5,441.0 L298.5,441.0 L299.5,441.0 L300.5,441.0 L301.5,441.0 L302.5,441.0 L303.5,441.0 L304.5,441.0 L305.5,441.0 L306.5,441.0 L307.5,441.0 L308.5,441.0 L309.5,441.0 L310.5,441.0 L311.5,441.0 L311.5,440.0 L312.5,440.0 L313.5,440.0 L314.5,440.0 L315.5,440.0 L316.5,440.0 L317.5,440.0 L318.5,440.0 L319.5,440.0 L320.5,440.0 L321.5,440.0 L322.5,440.0 L323.5,440.0 L324.5,440.0 L325.5,440.0 L326.5,440.0 L327.5,440.0 L328.5,440.0 L329.5,440.0 L330.5,440.0 L331.5,440.0 L332.5,440.0 L333.5,440.0 L333.5,439.0 L334.5,439.0 L335.5,439.0 L336.5,439.0 L337.5,439.0 L338.5,439.0 L339.5,439.0 L340.5,439.0 L341.5,439.0 L342.5,439.0 L343.5,439.0 L344.5,439.0 L345.5,439.0 L346.5,439.0 L347.5,439.0 L348.5,439.0 L349.5,439.0 L350.5,439.0 L350.5,438.0 L351.5,438.0 L352.5,438.0 L353.5,438.0 L354.5,438.0 L355.5,438.0 L356.5,438.0 L357.5,438.0 L358.5,438.0 L359.5,438.0 L360.5,438.0 L361.5,438.0 L362.5,438.0 L363.5,438.0 L364.5,438.0 L364.5,437.0 L365.5,437.0 L366.5,437.0 L367.5,437.0 L368.5,437.0 L369.5,437.0 L370.5,437.0 L371.5,437.0 L372.5,437.0 L373.5,437.0 L374.5,437.0 L375.5,437.0 L376.5,437.0 L377.5,437.0 L377.5,436.0 L378.5,436.0 L379.5,436.0 L380.5,436.0 L381.5,436.0 L382.5,436.0 L383.5,436.0 L384.5,436.0 L385.5,436.0 L386.5,436.0 L387.5,436.0 L388.5,436.0 L388.5,435.0 L389.5,435.0 L390.5,435.0 L391.5,435.0 L392.5,435.0 L393.5,435.0 L394.5,435.0 L395.5,435.0 L396.5,435.0 L397.5,435.0 L398.5,435.0 L399.5,435.0 L400.5,435.0 L401.5,435.0 L402.5,435.0 L403.5,435.0 L404.5,435.0 L405.5,435.0 L406.5,435.0 L407.5,435.0 L408.5,435.0 L409.5,435.0 L410.5,435.0 L411.5,435.0 L412.5,435.0 L413.5,435.0 L414.5,435.0 L415.5,435.0 L416.5,435.0 L417.5,435.0 L418.5,435.0 L419.5,435.0 L420.5,435.0 L421.5,435.0 L421.5,436.0 L422.5,436.0 L423.5,436.0 L424.5,436.0 L425.5,436.0 L426.5,436.0 L427.5,436.0 L428.5,436.0 L428.5,437.0 L429.5,437.0 L430.5,437.0 L431.5,437.0 L432.5,437.0 L433.5,437.0 L434.5,437.0 L434.5,438.0 L435.5,438.0 L436.5,438.0 L437.5,438.0 L438.5,438.0 L439.5,438.0 L439.5,439.0 L440.5,439.0 L441.5,439.0 L442.5,439.0 L443.5,439.0 L444.5,439.0 L444.5,440.0 L445.5,440.0 L446.5,440.0 L447.5,440.0 L448.5,440.0 L449.5,440.0 L450.5,440.0 L450.5,441.0 L451.5,441.0 L452.5,441.0 L453.5,441.0 L454.5,441.0 L455.5,441.0 L456.5,441.0 L457.5,441.0 L458.5,441.0 L459.5,441.0 L460.5,441.0 L461.5,441.0 L462.5,441.0 L462.5,442.0 L463.5,442.0 L463.5,441.0 L464.5,441.0 L465.5,441.0 L466.5,441.0 L467.5,441.0 L468.5,441.0 L469.5,441.0 L470.5,441.0 L471.5,441.0 L472.5,441.0 L473.5,441.0 L474.5,441.0 L475.5,441.0 L476.5,441.0 L477.5,441.0 L478.5,441.0 L479.5,441.0 L480.5,441.0 L481.5,441.0 L482.5,441.0 L483.5,441.0 L484.5,441.0 L485.5,441.0 L486.5,441.0 L487.5,441.0 L488.5,441.0 L489.5,441.0 L490.5,441.0 L491.5,441.0 L492.5,441.0 L493.5,441.0 L494.5,441.0 L495.5,441.0 L496.5,441.0 L497.5,441.0 L498.5,441.0 L499.5,441.0 L500.5,441.0 L501.5,441.0 L502.5,441.0 L503.5,441.0 L504.5,441.0 L505.5,441.0 L506.5,441.0 L507.5,441.0 L508.5,441.0 L509.5,441.0 L510.5,441.0 L511.5,441.0 L512.5,441.0 L513.5,441.0 L514.5,441.0 L515.5,441.0 L516.5,441.0 L516.5,440.0 L517.5,440.0 L518.5,440.0 L519.5,440.0 L520.5,440.0 L521.5,440.0 L522.5,440.0 L523.5,440.0 L524.5,440.0 L525.5,440.0 L526.5,440.0 L527.5,440.0 L528.5,440.0 L529.5,440.0 L530.5,440.0 L531.5,440.0 L532.5,440.0 L533.5,440.0 L534.5,440.0 L535.5,440.0 L536.5,440.0 L537.5,440.0 L538.5,440.0 L538.5,439.0 L539.5,439.0 L540.5,439.0 L541.5,439.0 L542.5,439.0 L543.5,439.0 L544.5,439.0 L545.5,439.0 L546.5,439.0 L547.5,439.0 L548.5,439.0 L549.5,439.0 L550.5,439.0 L551.5,439.0 L552.5,439.0 L553.5,439.0 L554.5,439.0 L555.5,439.0 L555.5,438.0 L556.5,438.0 L557.5,438.0 L558.5,438.0 L559.5,438.0 L560.5,438.0 L561.5,438.0 L562.5,438.0 L563.5,438.0 L564.5,438.0 L565.5,438.0 L566.5,438.0 L567.5,438.0 L568.5,438.0 L569.5,438.0 L569.5,437.0 L570.5,437.0 L571.5,437.0 L572.5,437.0 L573.5,437.0 L574.5,437.0 L575.5,437.0 L576.5,437.0 L577.5,437.0 L578.5,437.0 L579.5,437.0 L580.5,437.0 L581.5,437.0 L582.5,437.0 L582.5,436.0 L583.5,436.0 L584.5,436.0 L585.5,436.0 L586.5,436.0 L587.5,436.0 L588.5,436.0 L589.5,436.0 L590.5,436.0 L591.5,436.0 L592.5,436.0 L593.5,436.0 L593.5,435.0 L594.5,435.0 L595.5,435.0 L596.5,435.0 L597.5,435.0 L598.5,435.0 L599.5,435.0 L600.5,435.0 L601.5,435.0 L602.5,435.0 L603.5,435.0 L604.5,435.0 L605.5,435.0 L606.5,435.0 L607.5,435.0 L608.5,435.0 L609.5,435.0 L610.5,435.0 L611.5,435.0 L612.5,435.0 L613.5,435.0 L614.5,435.0 L615.5,435.0 L616.5,435.0 L617.5,435.0 L618.5,435.0 L619.5,435.0 L620.5,435.0 L621.5,435.0 L622.5,435.0 L623.5,435.0 L624.5,435.0 L625.5,435.0 L626.5,435.0 L626.5,436.0 L627.5,436.0 L628.5,436.0 L629.5,436.0 L630.5,436.0 L631.5,436.0 L632.5,436.0 L633.5,436.0 L633.5,437.0 L634.5,437.0 L635.5,437.0 L636.5,437.0 L637.5,437.0 L638.5,437.0 L639.5,437.0 L639.5,438.0 L640.5,438.0 L641.5,438.0 L642.5,438.0 L643.5,438.0 L643.5,439.0 L644.5,439.0 L645.5,439.0 L646.5,439.0 L647.5,439.0 L648.5,439.0 L649.5,439.0 L649.5,440.0 L650.5,440.0 L651.5,440.0 L652.5,440.0 L653.5,440.0 L654.5,440.0 L654.5,441.0 L655.5,441.0 L656.5,441.0 L657.5,441.0 L658.5,441.0 L659.5,441.0 L660.5,441.0 L661.5,441.0 L662.5,441.0 L663.5,441.0 L664.5,441.0 L665.5,441.0 L666.5,441.0 L667.5,441.0 L668.5,441.0 L669.5,441.0 L670.5,441.0 L671.5,441.0 L672.5,441.0 L673.5,441.0 L674.5,441.0 L675.5,441.0 L676.5,441.0 L677.5,441.0 L678.5,441.0 L679.5,441.0 L680.5,441.0 L681.5,441.0 L682.5,441.0 L683.5,441.0 L684.5,441.0 L685.5,441.0 L686.5,441.0 L687.5,441.0 L688.5,441.0 L689.5,441.0 L690.5,441.0 L691.5,441.0 L692.5,441.0 L693.5,441.0 L694.5,441.0 L695.5,441.0 L696.5,441.0 L697.5,441.0 L698.5,441.0 L699.5,441.0 L700.5,441.0 L701.5,441.0 L702.5,441.0 L703.5,441.0 L704.5,441.0 L705.5,441.0 L706.5,441.0 L707.5,441.0 L708.5,441.0 L709.5,441.0 L710.5,441.0 L711.5,441.0 L712.5,441.0 L713.5,441.0 L714.5,441.0 L715.5,441.0 L716.5,441.0 L717.5,441.0 L718.5,441.0 L719.5,441.0 L720.5,441.0 L720.5,440.0 L721.5,440.0 L722.5,440.0 L723.5,440.0 L724.5,440.0 L725.5,440.0 L726.5,440.0 L727.5,440.0 L728.5,440.0 L729.5,440.0 L730.5,440.0 L731.5,440.0 L732.5,440.0 L733.5,440.0 L734.5,440.0 L735.5,440.0 L736.5,440.0 L737.5,440.0 L738.5,440.0 L739.5,440.0 L740.5,440.0 L741.5,440.0 L742.5,440.0 L743.5,440.0 L743.5,439.0 L744.5,439.0 L745.5,439.0 L746.5,439.0 L747.5,439.0 L748.5,439.0 L749.5,439.0 L750.5,439.0 L751.5,439.0 L752.5,439.0 L753.5,439.0 L754.5,439.0 L755.5,439.0 L756.5,439.0 L757.5,439.0 L758.5,439.0 L759.5,439.0 L759.5,438.0 L760.5,438.0 L761.5,438.0 L762.5,438.0 L763.5,438.0 L764.5,438.0 L765.5,438.0 L766.5,438.0 L767.5,438.0 L768.5,438.0 L769.5,438.0 L770.5,438.0 L771.5,438.0 L772.5,438.0 L773.5,438.0 L774.5,438.0 L774.5,437.0 L775.5,437.0 L776.5,437.0 L777.5,437.0 L778.5,437.0 L779.5,437.0 L780.5,437.0 L781.5,437.0 L782.5,437.0 L783.5,437.0 L784.5,437.0 L785.5,437.0 L786.5,437.0 L786.5,436.0 L787.5,436.0 L788.5,436.0 L789.5,436.0 L790.5,436.0 L791.5,436.0 L792.5,436.0 L793.5,436.0 L794.5,436.0 L795.5,436.0 L796.5,436.0 L797.5,436.0 L798.5,436.0 L798.5,435.0 L799.5,435.0 L800.5,435.0 L801.5,435.0 L802.5,435.0 L803.5,435.0 L804.5,435.0 L805.5,435.0 L806.5,435.0 L807.5,435.0 L808.5,435.0 L809.5,435.0 L810.5,435.0 L811.5,435.0 L812.5,435.0 L813.5,435.0 L814.5,435.0 L815.5,435.0 L816.5,435.0 L817.5,435.0 L818.5,435.0 L819.5,435.0 L820.5,435.0 L821.5,435.0 L822.5,435.0 L823.5,435.0 L824.5,435.0 L825.5,435.0 L826.5,435.0 L827.5,435.0 L828.5,435.0 L829.5,435.0 L830.5,435.0 L831.5,435.0 L831.5,436.0 L832.5,436.0 L833.5,436.0 L834.5,436.0 L835.5,436.0 L836.5,436.0 L837.5,436.0 L838.5,436.0 L838.5,437.0 L839.5,437.0 L840.5,437.0 L841.5,437.0 L842.5,437.0 L843.5,437.0 L843.5,438.0 L844.5,438.0 L845.5,438.0 L846.5,438.0 L847.5,438.0 L848.5,438.0 L848.5,439.0 L849.5,439.0 L850.5,439.0 L851.5,439.0 L852.5,439.0 L853.5,439.0 L853.5,440.0 L854.5,440.0 L855.5,440.0 L856.5,440.0 L857.5,440.0 L858.5,440.0 L859.5,440.0 L859.5,441.0 L860.5,441.0 L861.5,441.0 L862.5,441.0 L863.5,441.0 L864.5,441.0 L865.5,441.0 L866.5,441.0 L867.5,441.0 L868.5,441.0 L869.5,441.0 L870.5,441.0 L871.5,441.0 L872.5,441.0 L873.5,441.0 L874.5,441.0 L875.5,441.0 L876.5,441.0 L877.5,441.0 L878.5,441.0 L879.5,441.0 L880.5,441.0 L881.5,441.0 L882.5,441.0 L883.5,441.0 L884.5,441.0 L885.5,441.0 L886.5,441.0 L887.5,441.0 L888.5,441.0 L889.5,441.0 L890.5,441.0 L891.5,441.0 L892.5,441.0 L893.5,441.0 L894.5,441.0 L895.5,441.0 L896.5,441.0 L897.5,441.0 L898.5,441.0 L899.5,441.0 L900.5,441.0 L901.5,441.0 L902.5,441.0 L903.5,441.0 L904.5,441.0 L905.5,441.0 L906.5,441.0 L907.5,441.0 L908.5,441.0 L909.5,441.0 L910.5,441.0 L911.5,441.0 L912.5,441.0 L913.5,441.0 L914.5,441.0 L915.5,441.0 L916.5,441.0 L917.5,441.0 L918.5,441.0 L919.5,441.0 L920.5,441.0 L921.5,441.0 L922.5,441.0 L923.5,441.0 L924.5,441.0 L925.5,441.0 L925.5,440.0 L926.5,440.0 L927.5,440.0 L928.5,440.0 L929.5,440.0 L930.5,440.0 L931.5,440.0 L932.5,440.0 L933.5,440.0 L934.5,440.0 L935.5,440.0 L936.5,440.0 L937.5,440.0 L938.5,440.0 L939.5,440.0 L940.5,440.0 L941.5,440.0 L942.5,440.0 L943.5,440.0 L944.5,440.0 L945.5,440.0 L946.5,440.0 L947.5,440.0 L947.5,439.0 L948.5,439.0 L949.5,439.0 L950.5,439.0 L951.5,439.0 L952.5,439.0 L953.5,439.0 L954.5,439.0 L955.5,439.0 L956.5,439.0 L957.5,439.0 L958.5,439.0 L959.5,439.0 L960.5,439.0 L961.5,439.0 L962.5,439.0 L963.5,439.0 L964.5,439.0 L964.5,438.0 L965.5,438.0 L966.5,438.0 L967.5,438.0 L968.5,438.0 L969.5,438.0 L970.5,438.0 L971.5,438.0 L972.5,438.0 L973.5,438.0 L974.5,438.0 L975.5,438.0 L976.5,438.0 L977.5,438.0 L978.5,438.0 L978.5,437.0 L979.5,437.0 L980.5,437.0 L981.5,437.0 L982.5,437.0 L983.5,437.0 L984.5,437.0 L985.5,437.0 L986.5,437.0 L987.5,437.0 L988.5,437.0 L989.5,437.0 L990.5,437.0 L991.5,437.0 L991.5,436.0 L992.5,436.0 L993.5,436.0 L994.5,436.0 L995.5,436.0 L996.5,436.0 L997.5,436.0 L998.5,436.0 L999.5,436.0 L1000.5,436.0 L1001.5,436.0 L1002.5,436.0 L1002.5,435.0 L1003.5,435.0 L1004.5,435.0 L1005.5,435.0 L1006.5,435.0 L1007.5,435.0 L1008.5,435.0 L1009.5,435.0 L1010.5,435.0 L1011.5,435.0 L1012.5,435.0 L1013.5,435.0 L1014.5,435.0 L1015.5,435.0 L1016.5,435.0 L1017.5,435.0 L1018.5,435.0 L1019.5,435.0 L1020.5,435.0 L1021.5,435.0 L1022.5,435.0 L1023.5,435.0 L1024.5,435.0 L1025.5,435.0 L1026.5,435.0 L1027.5,435.0 L1028.5,435.0 L1029.5,435.0 L1030.5,435.0 L1031.5,435.0 L1032.5,435.0 L1033.5,435.0 L1034.5,435.0 L1035.5,435.0 L1036.5,435.0 L1036.5,436.0 L1037.5,436.0 L1038.5,436.0 L1039.5,436.0 L1040.5,436.0 L1041.5,436.0 L1042.5,436.0 L1043.5,436.0 L1043.5,437.0 L1044.5,437.0 L1045.5,437.0 L1046.5,437.0 L1047.5,437.0 L1048.5,437.0 L1048.5,438.0 L1049.5,438.0 L1050.5,438.0 L1051.5,438.0 L1052.5,438.0 L1053.5,438.0 L1053.5,439.0 L1054.5,439.0 L1055.5,439.0 L1056.5,439.0 L1057.5,439.0 L1058.5,439.0 L1058.5,440.0 L1059.5,440.0 L1060.5,440.0 L1061.5,440.0 L1062.5,440.0 L1063.5,440.0 L1064.5,440.0 L1064.5,441.0 L1065.5,441.0 L1066.5,441.0 L1067.5,441.0 L1068.5,441.0 L1069.5,441.0 L1070.5,441.0 L1071.5,441.0 L1072.5,441.0 L1073.5,441.0 L1074.5,441.0 L1075.5,441.0 L1076.5,441.0 L1077.5,441.0 L1078.5,441.0 L1079.5,441.0 L1080.5,441.0 L1081.5,441.0 L1082.5,441.0 L1083.5,441.0 L1084.5,441.0 L1085.5,441.0 L1086.5,441.0 L1087.5,441.0 L1088.5,441.0 L1089.5,441.0 L1090.5,441.0 L1091.5,441.0 L1092.5,441.0 L1093.5,441.0 L1094.5,441.0 L1095.5,441.0 L1096.5,441.0 L1097.5,441.0 L1098.5,441.0 L1099.5,441.0 L1100.5,441.0 L1101.5,441.0 L1102.5,441.0 L1103.5,441.0 L1104.5,441.0 L1105.5,441.0 L1106.5,441.0 L1107.5,441.0 L1108.5,441.0 L1109.5,441.0 L1110.5,441.0 L1111.5,441.0 L1112.5,441.0 L1113.5,441.0 L1114.5,441.0 L1115.5,441.0 L1116.5,441.0 L1117.5,441.0 L1118.5,441.0 L1119.5,441.0 L1120.5,441.0 L1121.5,441.0 L1122.5,441.0 L1123.5,441.0 L1124.5,441.0 L1125.5,441.0 L1126.5,441.0 L1127.5,441.0 L1128.5,441.0 L1129.5,441.0 L1130.5,441.0 L1130.5,440.0 L1131.5,440.0 L1132.5,440.0 L1133.5,440.0 L1134.5,440.0 L1135.5,440.0 L1136.5,440.0 L1137.5,440.0 L1138.5,440.0 L1139.5,440.0 L1140.5,440.0 L1141.5,440.0 L1142.5,440.0 L1143.5,440.0 L1144.5,440.0 L1145.5,440.0 L1146.5,440.0 L1147.5,440.0 L1148.5,440.0 L1149.5,440.0 L1150.5,440.0 L1151.5,440.0 L1152.5,440.0 L1152.5,439.0 L1153.5,439.0 L1154.5,439.0 L1155.5,439.0 L1156.5,439.0 L1157.5,439.0 L1158.5,439.0 L1159.5,439.0 L1160.5,439.0 L1161.5,439.0 L1162.5,439.0 L1163.5,439.0 L1164.5,439.0 L1165.5,439.0 L1166.5,439.0 L1167.5,439.0 L1168.5,439.0 L1169.5,439.0 L1169.5,438.0 L1170.5,438.0 L1171.5,438.0 L1172.5,438.0 L1173.5,438.0 L1174.5,438.0 L1175.5,438.0 L1176.5,438.0 L1177.5,438.0 L1178.5,438.0 L1179.5,438.0 L1180.5,438.0 L1181.5,438.0 L1182.5,438.0 L1183.5,438.0 L1183.5,437.0 L1184.5,437.0 L1185.5,437.0 L1186.5,437.0 L1187.5,437.0 L1188.5,437.0 L1189.5,437.0 L1190.5,437.0 L1191.5,437.0 L1192.5,437.0 L1193.5,437.0 L1194.5,437.0 L1195.5,437.0 L1196.5,437.0 L1196.5,436.0 L1197.5,436.0 L1198.5,436.0 L1199.5,436.0 L1200.5,436.0 L1201.5,436.0 L1202.5,436.0 L1203.5,436.0 L1204.5,436.0 L1205.5,436.0 L1206.5,436.0 L1207.5,436.0 L1207.5,435.0 L1208.5,435.0 L1209.5,435.0 L1210.5,435.0 L1211.5,435.0 L1212.5,435.0 L1213.5,435.0 L1214.5,435.0 L1215.5,435.0 L1216.5,435.0 L1217.5,435.0 L1218.5,435.0 L1219.5,435.0 L1220.5,435.0 L1221.5,435.0 L1222.5,435.0 L1223.5,435.0 L1224.5,435.0 L1225.5,435.0 L1226.5,435.0 L1227.5,435.0 L1228.5,435.0 L1229.5,435.0 L1230.5,435.0 L1231.5,435.0 L1232.5,435.0 L1233.5,435.0 L1234.5,435.0 L1235.5,435.0 L1236.5,435.0 L1237.5,435.0 L1238.5,435.0 L1239.5,435.0 L1240.5,435.0 L1240.5,436.0 L1241.5,436.0 L1242.5,436.0 L1243.5,436.0 L1244.5,436.0 L1245.5,436.0 L1246.5,436.0 L1247.5,436.0 L1247.5,437.0 L1248.5,437.0 L1249.5,437.0" fill="none" stroke="#f0f050" stroke-width="2" shape-rendering="crispEdges"/><path d="M292 408.5H1249" fill="none" stroke="#58e058" stroke-width="1" shape-rendering="crispEdges"/><path d=" M400.0 408V903H412.0V408 M604.8 408V903H616.8V408 M809.5 408V903H821.5V408 M1014.2 408V903H1026.2V408 M1219.0 408V903H1231.0V408" fill="none" stroke="#3ce63c" stroke-width="2" shape-rendering="crispEdges"/><path d="M292.5,802.6 L293.5,801.7 L294.5,800.7 L295.5,799.7 L296.5,798.7 L297.5,797.7 L298.5,796.7 L299.5,795.6 L300.5,794.5 L301.5,793.4 L302.5,792.3 L303.5,791.2 L304.5,790.1 L305.5,788.9 L306.5,787.8 L307.5,786.6 L308.5,785.4 L309.5,784.2 L310.5,782.9 L311.5,781.7 L312.5,780.5 L313.5,779.2 L314.5,777.9 L315.5,776.6 L316.5,775.3 L317.5,774.0 L318.5,772.7 L319.5,771.3 L320.5,770.0 L321.5,768.6 L322.5,767.3 L323.5,765.9 L324.5,764.5 L325.5,763.1 L326.5,761.7 L327.5,760.2 L328.5,758.8 L329.5,757.4 L330.5,755.9 L331.5,754.4 L332.5,753.0 L333.5,751.5 L334.5,750.0 L335.5,748.5 L336.5,747.0 L337.5,745.5 L338.5,743.9 L339.5,742.4 L340.5,740.9 L341.5,739.3 L342.5,737.8 L343.5,736.2 L344.5,734.6 L345.5,733.1 L346.5,731.5 L347.5,729.9 L348.5,728.3 L349.5,726.7 L350.5,725.1 L351.5,723.4 L352.5,721.8 L353.5,720.2 L354.5,718.5 L355.5,716.9 L356.5,715.2 L357.5,713.6 L358.5,711.9 L359.5,710.3 L360.5,708.6 L361.5,706.9 L362.5,705.2 L363.5,703.5 L364.5,701.8 L365.5,700.1 L366.5,698.4 L367.5,696.7 L368.5,695.0 L369.5,693.3 L370.5,691.6 L371.5,689.9 L372.5,688.1 L373.5,686.4 L374.5,684.6 L375.5,682.9 L376.5,681.1 L377.5,679.4 L378.5,677.6 L379.5,675.9 L380.5,674.1 L381.5,672.3 L382.5,670.6 L383.5,668.8 L384.5,667.0 L385.5,665.2 L386.5,663.4 L387.5,661.7 L388.5,659.9 L389.5,658.1 L390.5,656.3 L391.5,654.5 L392.5,652.7 L393.5,650.8 L394.5,649.0 L395.5,647.2 L396.5,645.4 L397.5,643.6 L398.5,641.8 L399.5,639.9 L400.5,639.0 L401.0,639.9 L401.5,641.5 L402.0,643.6 L402.5,646.1 L403.0,648.9 L403.5,652.0 L404.0,655.4 L404.5,659.0 L405.5,670.9 L406.5,682.8 L407.5,694.6 L408.5,706.5 L409.5,718.4 L410.5,730.3 L411.5,742.2 L412.5,754.0 L413.5,765.9 L414.5,777.8 L415.0,781.2 L415.5,783.3 L416.5,787.3 L417.5,790.8 L418.5,794.1 L419.5,797.0 L420.5,799.6 L421.5,801.9 L422.5,804.0 L423.5,805.9 L424.5,807.6 L425.5,809.1 L426.5,810.5 L427.5,811.8 L428.5,812.9 L429.5,813.9 L430.5,814.8 L431.5,815.6 L432.5,816.4 L433.5,817.0 L434.5,817.6 L435.5,818.2 L436.5,818.6 L437.5,819.1 L438.5,819.5 L439.5,819.8 L440.5,820.1 L441.5,820.4 L442.5,820.7 L443.5,820.9 L444.5,821.1 L445.5,821.3 L446.5,821.5 L447.5,821.6 L448.5,821.8 L449.5,821.9 L450.5,822.0 L451.5,822.1 L452.5,822.2 L453.5,822.3 L454.5,822.3 L455.5,822.4 L456.5,822.5 L457.5,822.5 L458.5,822.5 L459.5,822.5 L460.5,822.4 L461.5,822.4 L462.5,822.3 L463.5,822.1 L464.5,821.9 L465.5,821.7 L466.5,821.5 L467.5,821.3 L468.5,821.0 L469.5,820.7 L470.5,820.3 L471.5,820.0 L472.5,819.6 L473.5,819.2 L474.5,818.8 L475.5,818.3 L476.5,817.8 L477.5,817.3 L478.5,816.8 L479.5,816.2 L480.5,815.6 L481.5,815.0 L482.5,814.4 L483.5,813.7 L484.5,813.1 L485.5,812.4 L486.5,811.7 L487.5,810.9 L488.5,810.2 L489.5,809.4 L490.5,808.6 L491.5,807.8 L492.5,806.9 L493.5,806.1 L494.5,805.2 L495.5,804.3 L496.5,803.4 L497.5,802.4 L498.5,801.5 L499.5,800.5 L500.5,799.5 L501.5,798.5 L502.5,797.4 L503.5,796.4 L504.5,795.3 L505.5,794.3 L506.5,793.2 L507.5,792.1 L508.5,790.9 L509.5,789.8 L510.5,788.6 L511.5,787.5 L512.5,786.3 L513.5,785.1 L514.5,783.9 L515.5,782.6 L516.5,781.4 L517.5,780.1 L518.5,778.9 L519.5,777.6 L520.5,776.3 L521.5,775.0 L522.5,773.7 L523.5,772.4 L524.5,771.0 L525.5,769.7 L526.5,768.3 L527.5,766.9 L528.5,765.5 L529.5,764.1 L530.5,762.7 L531.5,761.3 L532.5,759.9 L533.5,758.4 L534.5,757.0 L535.5,755.5 L536.5,754.1 L537.5,752.6 L538.5,751.1 L539.5,749.6 L540.5,748.1 L541.5,746.6 L542.5,745.1 L543.5,743.6 L544.5,742.0 L545.5,740.5 L546.5,738.9 L547.5,737.4 L548.5,735.8 L549.5,734.2 L550.5,732.7 L551.5,731.1 L552.5,729.5 L553.5,727.9 L554.5,726.3 L555.5,724.7 L556.5,723.0 L557.5,721.4 L558.5,719.8 L559.5,718.1 L560.5,716.5 L561.5,714.8 L562.5,713.2 L563.5,711.5 L564.5,709.8 L565.5,708.2 L566.5,706.5 L567.5,704.8 L568.5,703.1 L569.5,701.4 L570.5,699.7 L571.5,698.0 L572.5,696.3 L573.5,694.6 L574.5,692.9 L575.5,691.1 L576.5,689.4 L577.5,687.7 L578.5,685.9 L579.5,684.2 L580.5,682.5 L581.5,680.7 L582.5,679.0 L583.5,677.2 L584.5,675.4 L585.5,673.7 L586.5,671.9 L587.5,670.1 L588.5,668.4 L589.5,666.6 L590.5,664.8 L591.5,663.0 L592.5,661.2 L593.5,659.4 L594.5,657.6 L595.5,655.8 L596.5,654.0 L597.5,652.2 L598.5,650.4 L599.5,648.6 L600.5,646.8 L601.5,644.9 L602.5,643.1 L603.5,641.3 L604.5,639.5 L605.2,639.0 L605.5,639.3 L605.8,639.9 L606.2,641.5 L606.5,642.5 L606.8,643.6 L607.2,646.1 L607.5,647.4 L607.8,648.9 L608.2,652.0 L608.5,653.6 L608.8,655.4 L609.2,659.0 L609.5,662.0 L610.2,670.9 L610.5,673.9 L611.2,682.8 L611.5,685.7 L612.2,694.6 L612.5,697.6 L613.2,706.5 L613.5,709.5 L614.2,718.4 L614.5,721.4 L615.2,730.3 L615.5,733.2 L616.2,742.2 L616.5,745.1 L617.2,754.0 L617.5,757.0 L618.2,765.9 L618.5,768.9 L619.2,777.8 L619.5,780.1 L619.8,781.2 L620.2,783.3 L620.5,784.3 L621.2,787.3 L621.5,788.2 L622.5,791.7 L623.5,794.8 L624.5,797.6 L625.5,800.2 L626.5,802.4 L627.5,804.5 L628.5,806.3 L629.5,808.0 L630.5,809.5 L631.5,810.9 L632.5,812.1 L633.5,813.2 L634.5,814.1 L635.5,815.0 L636.5,815.8 L637.5,816.5 L638.5,817.2 L639.5,817.8 L640.5,818.3 L641.5,818.8 L642.5,819.2 L643.5,819.6 L644.5,819.9 L645.5,820.2 L646.5,820.5 L647.5,820.7 L648.5,821.0 L649.5,821.2 L650.5,821.4 L651.5,821.5 L652.5,821.7 L653.5,821.8 L654.5,821.9 L655.5,822.0 L656.5,822.1 L657.5,822.2 L658.5,822.3 L659.5,822.4 L660.5,822.4 L661.5,822.5 L662.5,822.5 L663.5,822.5 L664.5,822.5 L665.5,822.4 L666.5,822.3 L667.5,822.2 L668.5,822.1 L669.5,821.9 L670.5,821.7 L671.5,821.5 L672.5,821.2 L673.5,820.9 L674.5,820.6 L675.5,820.3 L676.5,819.9 L677.5,819.5 L678.5,819.1 L679.5,818.6 L680.5,818.2 L681.5,817.7 L682.5,817.2 L683.5,816.6 L684.5,816.1 L685.5,815.5 L686.5,814.9 L687.5,814.2 L688.5,813.6 L689.5,812.9 L690.5,812.2 L691.5,811.5 L692.5,810.7 L693.5,810.0 L694.5,809.2 L695.5,808.4 L696.5,807.5 L697.5,806.7 L698.5,805.8 L699.5,804.9 L700.5,804.0 L701.5,803.1 L702.5,802.2 L703.5,801.2 L704.5,800.2 L705.5,799.2 L706.5,798.2 L707.5,797.2 L708.5,796.1 L709.5,795.1 L710.5,794.0 L711.5,792.9 L712.5,791.8 L713.5,790.7 L714.5,789.5 L715.5,788.3 L716.5,787.2 L717.5,786.0 L718.5,784.8 L719.5,783.6 L720.5,782.3 L721.5,781.1 L722.5,779.8 L723.5,778.6 L724.5,777.3 L725.5,776.0 L726.5,774.7 L727.5,773.3 L728.5,772.0 L729.5,770.7 L730.5,769.3 L731.5,767.9 L732.5,766.6 L733.5,765.2 L734.5,763.8 L735.5,762.4 L736.5,761.0 L737.5,759.5 L738.5,758.1 L739.5,756.6 L740.5,755.2 L741.5,753.7 L742.5,752.2 L743.5,750.7 L744.5,749.2 L745.5,747.7 L746.5,746.2 L747.5,744.7 L748.5,743.2 L749.5,741.6 L750.5,740.1 L751.5,738.5 L752.5,737.0 L753.5,735.4 L754.5,733.8 L755.5,732.3 L756.5,730.7 L757.5,729.1 L758.5,727.5 L759.5,725.9 L760.5,724.2 L761.5,722.6 L762.5,721.0 L763.5,719.4 L764.5,717.7 L765.5,716.1 L766.5,714.4 L767.5,712.8 L768.5,711.1 L769.5,709.4 L770.5,707.7 L771.5,706.1 L772.5,704.4 L773.5,702.7 L774.5,701.0 L775.5,699.3 L776.5,697.6 L777.5,695.9 L778.5,694.2 L779.5,692.4 L780.5,690.7 L781.5,689.0 L782.5,687.3 L783.5,685.5 L784.5,683.8 L785.5,682.0 L786.5,680.3 L787.5,678.5 L788.5,676.8 L789.5,675.0 L790.5,673.2 L791.5,671.5 L792.5,669.7 L793.5,667.9 L794.5,666.1 L795.5,664.3 L796.5,662.6 L797.5,660.8 L798.5,659.0 L799.5,657.2 L800.5,655.4 L801.5,653.6 L802.5,651.8 L803.5,649.9 L804.5,648.1 L805.5,646.3 L806.5,644.5 L807.5,642.7 L808.5,640.8 L809.5,639.0 L810.0,639.0 L810.5,639.9 L811.0,641.5 L811.5,643.6 L812.0,646.1 L812.5,648.9 L813.0,652.0 L813.5,655.4 L814.0,659.0 L814.5,664.9 L815.0,670.9 L815.5,676.8 L816.0,682.8 L816.5,688.7 L817.0,694.6 L817.5,700.6 L818.0,706.5 L818.5,712.5 L819.0,718.4 L819.5,724.3 L820.0,730.3 L820.5,736.2 L821.0,742.2 L821.5,748.1 L822.0,754.0 L822.5,760.0 L823.0,765.9 L823.5,771.9 L824.0,777.8 L824.5,781.2 L825.0,783.3 L825.5,785.3 L826.0,787.3 L826.5,789.1 L827.5,792.5 L828.5,795.5 L829.5,798.3 L830.5,800.8 L831.5,803.0 L832.5,805.0 L833.5,806.8 L834.5,808.4 L835.5,809.9 L836.5,811.2 L837.5,812.4 L838.5,813.4 L839.5,814.4 L840.5,815.2 L841.5,816.0 L842.5,816.7 L843.5,817.3 L844.5,817.9 L845.5,818.4 L846.5,818.9 L847.5,819.3 L848.5,819.7 L849.5,820.0 L850.5,820.3 L851.5,820.6 L852.5,820.8 L853.5,821.0 L854.5,821.2 L855.5,821.4 L856.5,821.6 L857.5,821.7 L858.5,821.8 L859.5,821.9 L860.5,822.1 L861.5,822.1 L862.5,822.2 L863.5,822.3 L864.5,822.4 L865.5,822.4 L866.5,822.5 L867.5,822.5 L868.5,822.5 L869.5,822.5 L870.5,822.4 L871.5,822.3 L872.5,822.2 L873.5,822.0 L874.5,821.8 L875.5,821.6 L876.5,821.4 L877.5,821.1 L878.5,820.8 L879.5,820.5 L880.5,820.2 L881.5,819.8 L882.5,819.4 L883.5,819.0 L884.5,818.5 L885.5,818.1 L886.5,817.6 L887.5,817.0 L888.5,816.5 L889.5,815.9 L890.5,815.3 L891.5,814.7 L892.5,814.1 L893.5,813.4 L894.5,812.7 L895.5,812.0 L896.5,811.3 L897.5,810.5 L898.5,809.8 L899.5,809.0 L900.5,808.2 L901.5,807.3 L902.5,806.5 L903.5,805.6 L904.5,804.7 L905.5,803.8 L906.5,802.9 L907.5,801.9 L908.5,801.0 L909.5,800.0 L910.5,799.0 L911.5,798.0 L912.5,796.9 L913.5,795.9 L914.5,794.8 L915.5,793.7 L916.5,792.6 L917.5,791.5 L918.5,790.4 L919.5,789.2 L920.5,788.1 L921.5,786.9 L922.5,785.7 L923.5,784.5 L924.5,783.3 L925.5,782.0 L926.5,780.8 L927.5,779.5 L928.5,778.2 L929.5,777.0 L930.5,775.7 L931.5,774.3 L932.5,773.0 L933.5,771.7 L934.5,770.3 L935.5,769.0 L936.5,767.6 L937.5,766.2 L938.5,764.8 L939.5,763.4 L940.5,762.0 L941.5,760.6 L942.5,759.2 L943.5,757.7 L944.5,756.3 L945.5,754.8 L946.5,753.3 L947.5,751.9 L948.5,750.4 L949.5,748.9 L950.5,747.4 L951.5,745.9 L952.5,744.3 L953.5,742.8 L954.5,741.3 L955.5,739.7 L956.5,738.2 L957.5,736.6 L958.5,735.0 L959.5,733.4 L960.5,731.9 L961.5,730.3 L962.5,728.7 L963.5,727.1 L964.5,725.5 L965.5,723.8 L966.5,722.2 L967.5,720.6 L968.5,718.9 L969.5,717.3 L970.5,715.7 L971.5,714.0 L972.5,712.3 L973.5,710.7 L974.5,709.0 L975.5,707.3 L976.5,705.6 L977.5,704.0 L978.5,702.3 L979.5,700.6 L980.5,698.9 L981.5,697.2 L982.5,695.4 L983.5,693.7 L984.5,692.0 L985.5,690.3 L986.5,688.6 L987.5,686.8 L988.5,685.1 L989.5,683.3 L990.5,681.6 L991.5,679.8 L992.5,678.1 L993.5,676.3 L994.5,674.6 L995.5,672.8 L996.5,671.0 L997.5,669.2 L998.5,667.5 L999.5,665.7 L1000.5,663.9 L1001.5,662.1 L1002.5,660.3 L1003.5,658.5 L1004.5,656.7 L1005.5,654.9 L1006.5,653.1 L1007.5,651.3 L1008.5,649.5 L1009.5,647.7 L1010.5,645.9 L1011.5,644.0 L1012.5,642.2 L1013.5,640.4 L1014.5,638.5 L1014.8,639.0 L1015.2,639.9 L1015.5,640.6 L1015.8,641.5 L1016.2,643.6 L1016.5,644.8 L1016.8,646.1 L1017.2,648.9 L1017.5,650.4 L1017.8,652.0 L1018.2,655.4 L1018.5,657.2 L1018.8,659.0 L1019.5,667.9 L1019.8,670.9 L1020.5,679.8 L1020.8,682.8 L1021.5,691.7 L1021.8,694.6 L1022.5,703.5 L1022.8,706.5 L1023.5,715.4 L1023.8,718.4 L1024.5,727.3 L1024.8,730.3 L1025.5,739.2 L1025.8,742.2 L1026.5,751.1 L1026.8,754.0 L1027.5,763.0 L1027.8,765.9 L1028.5,774.8 L1028.8,777.8 L1029.2,781.2 L1029.5,782.3 L1029.8,783.3 L1030.5,786.3 L1030.8,787.3 L1031.5,790.0 L1032.5,793.3 L1033.5,796.3 L1034.5,798.9 L1035.5,801.3 L1036.5,803.5 L1037.5,805.4 L1038.5,807.2 L1039.5,808.8 L1040.5,810.2 L1041.5,811.5 L1042.5,812.6 L1043.5,813.7 L1044.5,814.6 L1045.5,815.4 L1046.5,816.2 L1047.5,816.9 L1048.5,817.5 L1049.5,818.0 L1050.5,818.5 L1051.5,819.0 L1052.5,819.4 L1053.5,819.7 L1054.5,820.1 L1055.5,820.4 L1056.5,820.6 L1057.5,820.9 L1058.5,821.1 L1059.5,821.3 L1060.5,821.4 L1061.5,821.6 L1062.5,821.7 L1063.5,821.9 L1064.5,822.0 L1065.5,822.1 L1066.5,822.2 L1067.5,822.3 L1068.5,822.3 L1069.5,822.4 L1070.5,822.5 L1071.5,822.5 L1072.5,822.5 L1073.5,822.5 L1074.5,822.5 L1075.5,822.4 L1076.5,822.3 L1077.5,822.1 L1078.5,822.0 L1079.5,821.8 L1080.5,821.6 L1081.5,821.3 L1082.5,821.1 L1083.5,820.8 L1084.5,820.4 L1085.5,820.1 L1086.5,819.7 L1087.5,819.3 L1088.5,818.9 L1089.5,818.4 L1090.5,817.9 L1091.5,817.4 L1092.5,816.9 L1093.5,816.4 L1094.5,815.8 L1095.5,815.2 L1096.5,814.6 L1097.5,813.9 L1098.5,813.2 L1099.5,812.6 L1100.5,811.8 L1101.5,811.1 L1102.5,810.4 L1103.5,809.6 L1104.5,808.8 L1105.5,808.0 L1106.5,807.1 L1107.5,806.3 L1108.5,805.4 L1109.5,804.5 L1110.5,803.6 L1111.5,802.6 L1112.5,801.7 L1113.5,800.7 L1114.5,799.7 L1115.5,798.7 L1116.5,797.7 L1117.5,796.7 L1118.5,795.6 L1119.5,794.5 L1120.5,793.4 L1121.5,792.3 L1122.5,791.2 L1123.5,790.1 L1124.5,788.9 L1125.5,787.8 L1126.5,786.6 L1127.5,785.4 L1128.5,784.2 L1129.5,782.9 L1130.5,781.7 L1131.5,780.5 L1132.5,779.2 L1133.5,777.9 L1134.5,776.6 L1135.5,775.3 L1136.5,774.0 L1137.5,772.7 L1138.5,771.3 L1139.5,770.0 L1140.5,768.6 L1141.5,767.3 L1142.5,765.9 L1143.5,764.5 L1144.5,763.1 L1145.5,761.7 L1146.5,760.2 L1147.5,758.8 L1148.5,757.4 L1149.5,755.9 L1150.5,754.4 L1151.5,753.0 L1152.5,751.5 L1153.5,750.0 L1154.5,748.5 L1155.5,747.0 L1156.5,745.5 L1157.5,743.9 L1158.5,742.4 L1159.5,740.9 L1160.5,739.3 L1161.5,737.8 L1162.5,736.2 L1163.5,734.6 L1164.5,733.1 L1165.5,731.5 L1166.5,729.9 L1167.5,728.3 L1168.5,726.7 L1169.5,725.1 L1170.5,723.4 L1171.5,721.8 L1172.5,720.2 L1173.5,718.5 L1174.5,716.9 L1175.5,715.2 L1176.5,713.6 L1177.5,711.9 L1178.5,710.3 L1179.5,708.6 L1180.5,706.9 L1181.5,705.2 L1182.5,703.5 L1183.5,701.8 L1184.5,700.1 L1185.5,698.4 L1186.5,696.7 L1187.5,695.0 L1188.5,693.3 L1189.5,691.6 L1190.5,689.9 L1191.5,688.1 L1192.5,686.4 L1193.5,684.6 L1194.5,682.9 L1195.5,681.1 L1196.5,679.4 L1197.5,677.6 L1198.5,675.9 L1199.5,674.1 L1200.5,672.3 L1201.5,670.6 L1202.5,668.8 L1203.5,667.0 L1204.5,665.2 L1205.5,663.4 L1206.5,661.7 L1207.5,659.9 L1208.5,658.1 L1209.5,656.3 L1210.5,654.5 L1211.5,652.7 L1212.5,650.8 L1213.5,649.0 L1214.5,647.2 L1215.5,645.4 L1216.5,643.6 L1217.5,641.8 L1218.5,639.9 L1219.5,639.0 L1220.0,639.9 L1220.5,641.5 L1221.0,643.6 L1221.5,646.1 L1222.0,648.9 L1222.5,652.0 L1223.0,655.4 L1223.5,659.0 L1224.5,670.9 L1225.5,682.8 L1226.5,694.6 L1227.5,706.5 L1228.5,718.4 L1229.5,730.3 L1230.5,742.2 L1231.5,754.0 L1232.5,765.9 L1233.5,777.8 L1234.0,781.2 L1234.5,783.3 L1235.5,787.3 L1236.5,790.8 L1237.5,794.1 L1238.5,797.0 L1239.5,799.6 L1240.5,801.9 L1241.5,804.0 L1242.5,805.9 L1243.5,807.6 L1244.5,809.1 L1245.5,810.5 L1246.5,811.8 L1247.5,812.9 L1248.5,813.9 L1249.5,814.8" fill="none" stroke="#40e8e8" stroke-width="2" stroke-linejoin="round"/><path d="M527.5 392.5H537.5V402.5L532.5 407.5L527.5 402.5Z" fill="#000" stroke="#b8e8e8" stroke-width="1"/><path d="M756.5 392.5H766.5V402.5L761.5 407.5L756.5 402.5Z" fill="#000" stroke="#c83030" stroke-width="1"/></g></svg><div class="t" style="left:529px;top:394px;font-size:10px;color:#fff">1</div><div class="t" style="left:758px;top:394px;font-size:10px;font-weight:bold;color:#fff">2</div><div class="t" style="left:186px;top:409px;font-size:11px;letter-spacing:-0.4px;color:#58d058">A: I2_1</div><div class="t" style="left:187px;top:425px;font-size:11px;color:#f0e8a8">(c5_2)</div><div class="a" style="left:180px;top:444px;width:5px;height:5px;border-radius:50%;background:#48d8e0"></div><div class="t" style="left:187px;top:441px;font-size:11px;color:#48c8d8">(u1_0)</div><div class="t" style="left:200px;width:87px;text-align:right;top:403px;font-size:11px;color:#50d4dc">100.0m</div><div class="t" style="left:200px;width:87px;text-align:right;top:465px;font-size:11px;color:#50d4dc">75.00m</div><div class="t" style="left:200px;width:87px;text-align:right;top:527px;font-size:11px;color:#50d4dc">50.00m</div><div class="t" style="left:200px;width:87px;text-align:right;top:589px;font-size:11px;color:#50d4dc">25.00m</div><div class="t" style="left:200px;width:87px;text-align:right;top:651px;font-size:11px;color:#50d4dc">0.000m</div><div class="t" style="left:200px;width:87px;text-align:right;top:713px;font-size:11px;color:#50d4dc">-25.00m</div><div class="t" style="left:200px;width:87px;text-align:right;top:775px;font-size:11px;color:#50d4dc">-50.00m</div><div class="t" style="left:200px;width:87px;text-align:right;top:837px;font-size:11px;color:#50d4dc">-75.00m</div><div class="t" style="left:200px;width:87px;text-align:right;top:899px;font-size:11px;color:#50d4dc">-100.0m</div><div class="t" style="left:253px;width:80px;text-align:center;top:910px;font-size:11px;font-weight:bold;color:#f0f0f0">40.00us</div><div class="t" style="left:390px;width:80px;text-align:center;top:910px;font-size:11px;font-weight:bold;color:#f0f0f0">42.50us</div><div class="t" style="left:527px;width:80px;text-align:center;top:910px;font-size:11px;font-weight:bold;color:#f0f0f0">45.00us</div><div class="t" style="left:663px;width:80px;text-align:center;top:910px;font-size:11px;font-weight:bold;color:#f0f0f0">47.50us</div><div class="t" style="left:800px;width:80px;text-align:center;top:910px;font-size:11px;font-weight:bold;color:#f0f0f0">50.00us</div><div class="t" style="left:936px;width:80px;text-align:center;top:910px;font-size:11px;font-weight:bold;color:#f0f0f0">52.50us</div><div class="t" style="left:1073px;width:80px;text-align:center;top:910px;font-size:11px;font-weight:bold;color:#f0f0f0">55.00us</div><div class="t" style="left:1209px;width:80px;text-align:center;top:910px;font-size:11px;font-weight:bold;color:#f0f0f0">57.50us</div><div class="a" style="left:176px;top:932px;width:1102px;height:17px;background-color:#fff;background-image:repeating-conic-gradient(#e4e1d2 0 25%,#fbfaf6 0 50%);background-size:2px 2px"></div><div class="a" style="left:176px;top:932px;width:17px;height:17px;border-left:1px solid #fff;border-top:1px solid #fff;border-right:1px solid #716f64;border-bottom:1px solid #716f64;background:#ece9d8"></div><div class="a" style="left:191px;top:933px;width:1px;height:15px;background:#aca899"></div><div class="a" style="left:177px;top:947px;width:15px;height:1px;background:#aca899"></div><div class="a" style="left:794px;top:932px;width:17px;height:17px;border-left:1px solid #fff;border-top:1px solid #fff;border-right:1px solid #716f64;border-bottom:1px solid #716f64;background:#ece9d8"></div><div class="a" style="left:809px;top:933px;width:1px;height:15px;background:#aca899"></div><div class="a" style="left:795px;top:947px;width:15px;height:1px;background:#aca899"></div><div class="a" style="left:1261px;top:932px;width:17px;height:17px;border-left:1px solid #fff;border-top:1px solid #fff;border-right:1px solid #716f64;border-bottom:1px solid #716f64;background:#ece9d8"></div><div class="a" style="left:1276px;top:933px;width:1px;height:15px;background:#aca899"></div><div class="a" style="left:1262px;top:947px;width:15px;height:1px;background:#aca899"></div><svg class="a" style="left:176px;top:932px" width="1102" height="17"><path d="M6 8.5L10 4.5V12.5Z" fill="#000"/><path d="M1090 4.5L1094 8.5L1090 12.5Z" fill="#000"/></svg><div class="a" style="left:176px;top:949px;width:1102px;height:28px;background:#ece9d8"></div><svg class="a" style="left:176px;top:949px" width="1102" height="24" shape-rendering="auto"><path d="M0 6.5H8.5M188 6.5H1102" stroke="#000" stroke-width="1"/><path d="M92 6.5L95.5 21.5H183.5L188.5 6.5" fill="#ece9d8" stroke="#000" stroke-width="1"/><path d="M8.5 6.5L13.5 21.5H88.5L92.5 6.5Z" fill="#fff" stroke="#000" stroke-width="1"/></svg><div class="t" style="left:191px;top:957px;font-size:11px;letter-spacing:-0.25px">Operating Point</div><div class="t" style="left:273px;top:957px;font-size:11px;letter-spacing:-0.3px">Transient Analysis</div><div class="a" style="left:1278px;top:76px;width:2px;height:901px;background:#ece9d8"></div><div class="a" style="left:175px;top:386px;width:1px;height:587px;background:#8c8a7e"></div><div class="a" style="left:0;top:975px;width:1280px;height:19px;background:#ece9d8"></div><div class="a" style="left:0;top:977px;width:50px;height:17px;border-top:1px solid #aca899;border-left:1px solid #aca899;border-right:1px solid #fff;border-bottom:1px solid #fff"></div><div class="a" style="left:52px;top:977px;width:1228px;height:17px;border-top:1px solid #aca899;border-left:1px solid #aca899;border-bottom:1px solid #fff"></div><div class="a" style="left:0;top:994px;width:1280px;height:30px;background:linear-gradient(#3168d5 0px,#4993e6 1px,#2e6fe0 3px,#245edb 6px,#245ddb 24px,#1941a5 30px)"></div><div class="a" style="left:0;top:994px;width:98px;height:30px;border-radius:0 10px 10px 0;background:linear-gradient(#3c9a3c 0px,#6cc06c 2px,#45a845 5px,#379a37 20px,#2c842c 28px)"></div><svg class="a" style="left:8px;top:999px" width="22" height="21"><path d="M2 4q4-2 8 0v7q-4-2-8 0z" fill="#f05020"/><path d="M11 4q4 2 9 0v7q-5 2-9 0z" fill="#50b030"/><path d="M2 12q4-2 8 0v7q-4-2-8 0z" fill="#2070e0"/><path d="M11 12q4 2 9 0v7q-5 2-9 0z" fill="#f0c020"/></svg><div class="t" style="left:35px;top:1000px;font-size:18px;font-weight:bold;font-style:italic;color:#fff;text-shadow:1px 1px 1px #205020">Start</div><div class="a" style="left:109px;top:996px;width:160px;height:26px;border-radius:3px;background:linear-gradient(#1e52c8,#1c4fc4 50%,#1846b8);border:1px solid #1a44a8"></div><svg class="a" style="left:119px;top:1001px" width="16" height="16"><rect x="0" y="0" width="16" height="16" fill="#fbeefa"/><path d="M2 3.5H11M2 5.5H9M4.5 3V13M9.5 5V11" stroke="#444" stroke-width="1" fill="none"/><path d="M11 2.5l4 3l-4 3z" fill="#d02020"/><ellipse cx="13" cy="13" rx="3" ry="2.2" fill="#2020a0"/><circle cx="6.5" cy="13" r="2.2" fill="#20a040"/><path d="M9.5 11L12 13" stroke="#444" stroke-width="1"/></svg><div class="t" style="left:139px;top:1003px;font-size:11px;letter-spacing:-0.2px;color:#fff">CircuitMaker</div><div class="t" style="left:1098px;top:1003px;font-size:12px;color:#fff">HU</div><div class="a" style="left:1134px;top:994px;width:146px;height:30px;border-left:1px solid #1042af;background:linear-gradient(#0c8bea 0px,#35aef5 1px,#169ae9 4px,#0f8be2 24px,#0b6ccc 30px)"></div><svg class="a" style="left:1140px;top:998px" width="100" height="22"><path d="M3 15l9-9l2 2l-9 9z" fill="#40a040"/><path d="M5 16l8-8l2 1l-8 8z" fill="#e0c020"/><path d="M2 17h10" stroke="#fff" stroke-width="1.5"/><path d="M23 4l6-2l6 2v6q0 6-6 9q-6-3-6-9z" fill="#d02020" stroke="#fff" stroke-width="1"/><path d="M26.5 7.5l5 5M31.5 7.5l-5 5" stroke="#fff" stroke-width="1.6"/><path d="M44 8h4l5-4v14l-5-4h-4z" fill="#f08020" stroke="#203060" stroke-width="0.8"/><path d="M55 6q3 5 0 10" fill="none" stroke="#203060" stroke-width="1.3"/><circle cx="67" cy="10" r="5.5" fill="#b0b0b0" stroke="#606060"/><circle cx="67" cy="10" r="2" fill="#505050"/><path d="M70 17l4-4" stroke="#c0d8f0" stroke-width="1.5"/><rect x="81" y="2" width="10" height="18" rx="5" fill="#1a2a9a"/><path d="M84 7l4 4l-2 2v-8l2 2l-4 4" fill="none" stroke="#e02020" stroke-width="1.2"/></svg><div class="t" style="left:1241px;top:1003px;font-size:12px;color:#fff">5:43</div></body></html>
